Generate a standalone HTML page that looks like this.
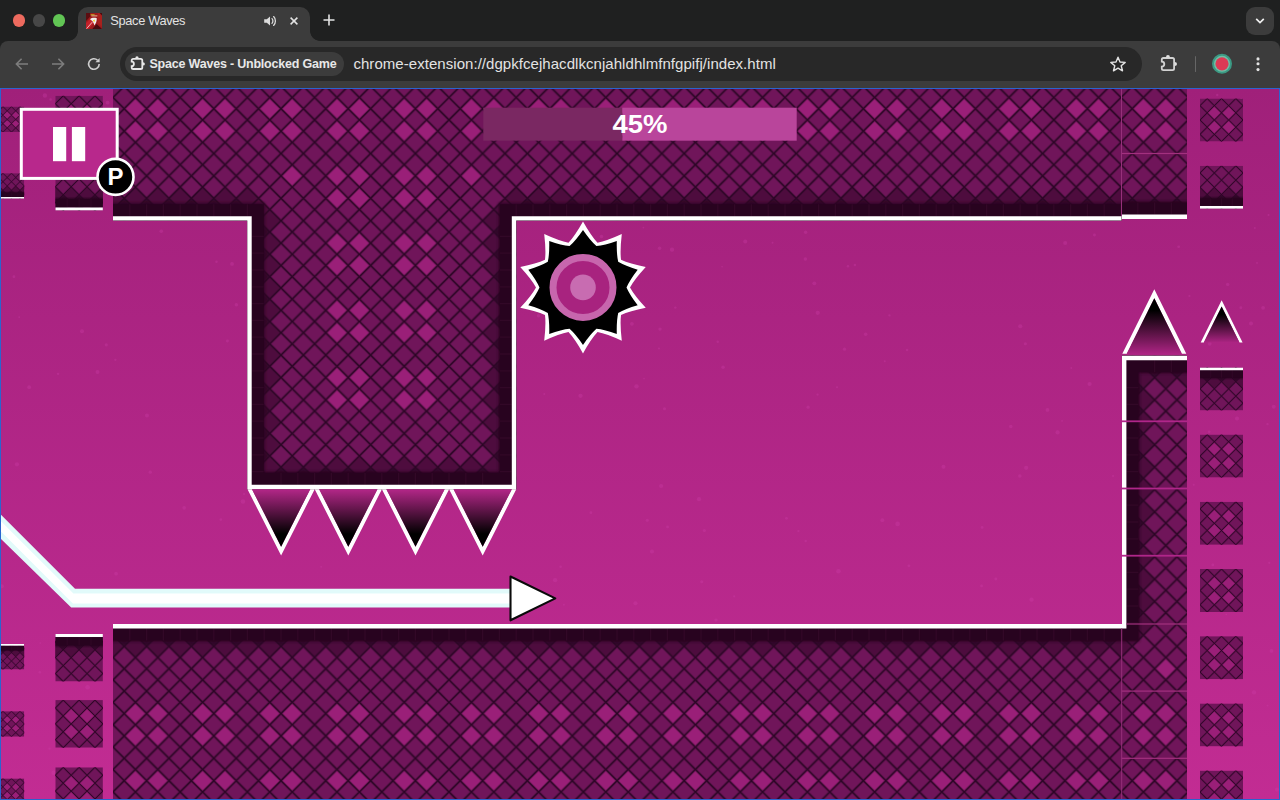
<!DOCTYPE html>
<html><head><meta charset="utf-8"><title>Space Waves</title>
<style>
html,body{margin:0;padding:0;background:#1f2020;overflow:hidden}
body{width:1280px;height:800px;position:relative;font-family:"Liberation Sans",sans-serif}
#game{position:absolute;left:0;top:88px;display:block}
#tabbar{position:absolute;left:0;top:0;width:1280px;height:41px;background:#1f2020}
.tl{position:absolute;top:14px;width:12.5px;height:12.5px;border-radius:50%}
#tab{position:absolute;left:78px;top:7px;width:232px;height:34px;background:#3c3c3c;border-radius:10px 10px 0 0}
#tab:before,#tab:after{content:"";position:absolute;bottom:0;width:10px;height:10px}
#tab:before{left:-10px;background:radial-gradient(circle at 0 0,rgba(60,60,60,0) 9.5px,#3c3c3c 10.2px)}
#tab:after{right:-10px;background:radial-gradient(circle at 100% 0,rgba(60,60,60,0) 9.5px,#3c3c3c 10.2px)}
#fav{position:absolute;left:86px;top:13px;width:16px;height:16px}
#title{position:absolute;left:110.3px;top:12.7px;font-size:12.8px;line-height:16px;color:#e3e3e3;letter-spacing:-.33px;white-space:nowrap}
#toolbar{position:absolute;left:0;top:41px;width:1280px;height:47px;background:#3c3c3c;border-radius:8px 8px 0 0}
#omni{position:absolute;left:120px;top:47px;width:1022px;height:34px;border-radius:17px;background:#282828}
#chip{position:absolute;left:125.2px;top:51.9px;width:219.2px;height:24px;border-radius:12.5px;background:#3c3c3c}
#chiptxt{position:absolute;left:149.4px;top:56.3px;font-size:12.5px;line-height:16px;font-weight:700;color:#e8e8e8;letter-spacing:-.2px;white-space:nowrap}
#url{position:absolute;left:353.4px;top:54.6px;font-size:15px;line-height:18px;color:#e3e3e3;letter-spacing:.05px;white-space:nowrap}
#chev{position:absolute;left:1246px;top:7px;width:28px;height:28px;border-radius:9px;background:#3c3c3c}
svg.ic{position:absolute;overflow:visible}
#sep{position:absolute;left:1194.5px;top:56px;width:1.6px;height:16px;background:#666;border-radius:1px}

</style></head><body>

<div id="tabbar"></div>
<div class="tl" style="left:12.8px;background:#ed6a5e"></div>
<div class="tl" style="left:32.8px;background:#474747"></div>
<div class="tl" style="left:52.8px;background:#61c554"></div>
<div id="tab"></div>
<svg id="fav" viewBox="0 0 16 16"><rect width="16" height="16" fill="#9c1b1c"/><path d="M0 0H4.2V3.4L0 8z" fill="#5c0d11"/><path d="M12 0H16V14L12 10z" fill="#a8211d"/><path d="M13.5 0L16 2.4V0z" fill="#4a0a0e"/><path d="M0 16V10L4 6L8 10L2.5 16z" fill="#c4212a"/><path d="M0.6 15.6L6.2 9.2" stroke="#f4b6bb" stroke-width="1" fill="none"/><path d="M6.3 16L10.6 11L16 16z" fill="#4a0a0e"/><path d="M4 6.2C5.5 4.6 8.5 4.4 10.8 5.2C10.8 8 10 10.4 8.4 12.4C7.8 9.6 6.4 7.6 4 6.2z" fill="#f2efef"/><path d="M6.8 7.4L9 6.4L8.4 9.2z" fill="#f0d21c"/><path d="M4.6 1.8H8.6" stroke="#c8b820" stroke-width="1" fill="none"/><path d="M5.4 2.9H11.4" stroke="#e8c9a0" stroke-width=".9" fill="none"/></svg>
<div id="title">Space Waves</div>
<svg class="ic" style="left:262px;top:13px" width="16" height="16" viewBox="0 0 16 16"><path d="M2.2 6.2H4.8L8 3.4V12.6L4.8 9.8H2.2z" fill="#dcdcdc"/><path d="M10 5.6C11.2 6.8 11.2 9.2 10 10.4" stroke="#dcdcdc" stroke-width="1.3" fill="none" stroke-linecap="round"/><path d="M11.6 3.6C14 5.8 14 10.2 11.6 12.4" stroke="#dcdcdc" stroke-width="1.3" fill="none" stroke-linecap="round"/></svg>
<svg class="ic" style="left:286px;top:13px" width="16" height="16" viewBox="0 0 16 16"><path d="M4.6 4.6L11.4 11.4M11.4 4.6L4.6 11.4" stroke="#e3e3e3" stroke-width="1.5" fill="none"/></svg>
<svg class="ic" style="left:321px;top:12px" width="16" height="16" viewBox="0 0 16 16"><path d="M8 2.5V13.5M2.5 8H13.5" stroke="#e3e3e3" stroke-width="1.6" fill="none"/></svg>
<div id="chev"></div>
<svg class="ic" style="left:1252px;top:13px" width="16" height="16" viewBox="0 0 16 16"><path d="M4.2 5.8L8 9.6L11.8 5.8" stroke="#f0f0f0" stroke-width="1.7" fill="none"/></svg>
<div id="toolbar"></div>
<svg class="ic" style="left:13px;top:55px" width="18" height="18" viewBox="0 0 18 18"><path d="M15 9H3.6M8.6 3.8L3.4 9L8.6 14.2" stroke="#7d7d7d" stroke-width="1.6" fill="none"/></svg>
<svg class="ic" style="left:49px;top:55px" width="18" height="18" viewBox="0 0 18 18"><path d="M3 9H14.4M9.4 3.8L14.6 9L9.4 14.2" stroke="#7d7d7d" stroke-width="1.6" fill="none"/></svg>
<svg class="ic" style="left:85px;top:55px" width="18" height="18" viewBox="0 0 18 18"><path d="M14.2 9A5.3 5.3 0 1 1 12.6 5.2" stroke="#d0d0d0" stroke-width="1.6" fill="none"/><path d="M14.6 3V7.2H10.4z" fill="#d0d0d0"/></svg>
<div id="omni"></div>
<div id="chip"></div>
<svg class="ic" style="left:0;top:0" width="1280" height="88" viewBox="0 0 1280 88"><path d="M131.70 60.40Q131.70 58.80 133.30 58.80H140.70Q142.30 58.80 142.30 60.40V67.40Q142.30 69.00 140.70 69.00H133.30Q131.70 69.00 131.70 67.40V66.10A2.20 2.20 0 0 0 131.70 61.70Z" stroke="#e8e8e8" stroke-width="1.8" fill="none"/><path d="M135.30 58.20A1.70 2.00 0 0 1 138.70 58.20ZM142.90 62.20A2.00 1.70 0 0 1 142.90 65.60Z" fill="#e8e8e8"/></svg>
<div id="chiptxt">Space Waves - Unblocked Game</div>
<div id="url">chrome-extension://dgpkfcejhacdlkcnjahldhlmfnfgpifj/index.html</div>
<svg class="ic" style="left:1109px;top:55px" width="18" height="18" viewBox="0 0 18 18"><path d="M9 2.2L11 7L16.2 7.4L12.2 10.8L13.5 15.8L9 13.1L4.5 15.8L5.8 10.8L1.8 7.4L7 7z" stroke="#e3e3e3" stroke-width="1.4" fill="none" stroke-linejoin="round"/></svg>
<svg class="ic" style="left:0;top:0" width="1280" height="88" viewBox="0 0 1280 88"><path d="M1161.80 59.60Q1161.80 58.00 1163.40 58.00H1172.50Q1174.10 58.00 1174.10 59.60V68.60Q1174.10 70.20 1172.50 70.20H1163.40Q1161.80 70.20 1161.80 68.60V66.60A2.50 2.50 0 0 0 1161.80 61.60Z" stroke="#d2d2d2" stroke-width="1.8" fill="none"/><path d="M1165.95 57.40A2.00 2.30 0 0 1 1169.95 57.40ZM1174.70 62.10A2.30 2.00 0 0 1 1174.70 66.10Z" fill="#e0e0e0"/></svg>
<div id="sep"></div>
<svg class="ic" style="left:1211px;top:53px" width="22" height="22" viewBox="0 0 22 22"><circle cx="11" cy="10.8" r="9" fill="#6fbfa6" stroke="#3b9a84" stroke-width="2"/><circle cx="11" cy="10.8" r="6.6" fill="#dc3a55"/></svg>
<svg class="ic" style="left:1249px;top:55px" width="18" height="18" viewBox="0 0 18 18"><circle cx="9" cy="3.9" r="1.55" fill="#e3e3e3"/><circle cx="9" cy="8.8" r="1.55" fill="#e3e3e3"/><circle cx="9" cy="14.6" r="1.55" fill="#e3e3e3"/></svg>

<svg id="game" width="1280" height="712" viewBox="0 88 1280 712">
<defs>
<linearGradient id="bg" x1="0" y1="88" x2="0" y2="800" gradientUnits="userSpaceOnUse"><stop offset="0" stop-color="#a0207a"/><stop offset="1" stop-color="#c22c93"/></linearGradient>
<linearGradient id="shT" x1="0" y1="0" x2="0" y2="1"><stop offset="0" stop-color="#28031f" stop-opacity="0"/><stop offset="1" stop-color="#28031f" stop-opacity=".8"/></linearGradient>
<symbol id="tile" viewBox="0 0 67.2 67.2" preserveAspectRatio="none"><rect width="67.2" height="67.2" fill="#70155a"/><path d="M22.4 11.2l11.2 11.2l-11.2 11.2l-11.2 -11.2zM22.4 33.6l11.2 11.2l-11.2 11.2l-11.2 -11.2zM44.8 11.2l11.2 11.2l-11.2 11.2l-11.2 -11.2zM44.8 33.6l11.2 11.2l-11.2 11.2l-11.2 -11.2z" fill="#9a1f78"/><path d="M11.2 0L0 11.2M33.6 0L0 33.6M56 0L0 56M78.4 0L0 78.4M100.8 0L0 100.8M123.2 0L0 123.2M-56 0L11.2 67.2M-33.6 0L33.6 67.2M-11.2 0L56 67.2M11.2 0L78.4 67.2M33.6 0L100.8 67.2M56 0L123.2 67.2" stroke="#3c0b33" stroke-opacity=".42" stroke-width="2.8" fill="none"/><path d="M11.2 0L0 11.2M33.6 0L0 33.6M56 0L0 56M78.4 0L0 78.4M100.8 0L0 100.8M123.2 0L0 123.2M-56 0L11.2 67.2M-33.6 0L33.6 67.2M-11.2 0L56 67.2M11.2 0L78.4 67.2M33.6 0L100.8 67.2M56 0L123.2 67.2" stroke="#2a0524" stroke-width="1.3" fill="none"/></symbol>
<symbol id="tileE" viewBox="0 0 67.2 67.2" preserveAspectRatio="none"><rect width="67.2" height="67.2" fill="#70155a"/><path d="M0 33.6l11.2 11.2l-11.2 11.2l-11.2 -11.2zM22.4 33.6l11.2 11.2l-11.2 11.2l-11.2 -11.2zM44.8 33.6l11.2 11.2l-11.2 11.2l-11.2 -11.2zM67.2 33.6l11.2 11.2l-11.2 11.2l-11.2 -11.2z" fill="#4e0c3e"/><path d="M11.2 44.8l11.2 11.2l-11.2 11.2l-11.2 -11.2zM33.6 44.8l11.2 11.2l-11.2 11.2l-11.2 -11.2zM56 44.8l11.2 11.2l-11.2 11.2l-11.2 -11.2z" fill="#33072a"/><path d="M11.2 0L0 11.2M33.6 0L0 33.6M56 0L0 56M78.4 0L0 78.4M100.8 0L0 100.8M123.2 0L0 123.2M-56 0L11.2 67.2M-33.6 0L33.6 67.2M-11.2 0L56 67.2M11.2 0L78.4 67.2M33.6 0L100.8 67.2M56 0L123.2 67.2" stroke="#3c0b33" stroke-opacity=".42" stroke-width="2.8" fill="none"/><path d="M11.2 0L0 11.2M33.6 0L0 33.6M56 0L0 56M78.4 0L0 78.4M100.8 0L0 100.8M123.2 0L0 123.2M-56 0L11.2 67.2M-33.6 0L33.6 67.2M-11.2 0L56 67.2M11.2 0L78.4 67.2M33.6 0L100.8 67.2M56 0L123.2 67.2" stroke="#2a0524" stroke-width="1.3" fill="none"/><rect y="47" width="67.2" height="4.2" fill="url(#shT)"/><rect y="50.8" width="67.2" height="12.2" fill="#28031f"/><path d="M16.8 51V63M33.6 51V63M50.4 51V63" stroke="#320827" stroke-width="1.4"/><rect y="62.8" width="67.2" height="4.4" fill="#fff"/></symbol>
<pattern id="pat" x="113" y="86.3" width="67.2" height="67.2" patternUnits="userSpaceOnUse"><path d="M11.2 0L0 11.2M33.6 0L0 33.6M56 0L0 56M78.4 0L0 78.4M100.8 0L0 100.8M123.2 0L0 123.2M-56 0L11.2 67.2M-33.6 0L33.6 67.2M-11.2 0L56 67.2M11.2 0L78.4 67.2M33.6 0L100.8 67.2M56 0L123.2 67.2" stroke="#3c0b33" stroke-opacity=".42" stroke-width="2.8" fill="none"/><path d="M11.2 0L0 11.2M33.6 0L0 33.6M56 0L0 56M78.4 0L0 78.4M100.8 0L0 100.8M123.2 0L0 123.2M-56 0L11.2 67.2M-33.6 0L33.6 67.2M-11.2 0L56 67.2M11.2 0L78.4 67.2M33.6 0L100.8 67.2M56 0L123.2 67.2" stroke="#2a0524" stroke-width="1.3" fill="none"/></pattern>
<linearGradient id="spk" x1="0" y1="0" x2="0" y2="1"><stop offset="0" stop-color="#000"/><stop offset=".22" stop-color="#000"/><stop offset="1" stop-color="#ac2483"/></linearGradient>
<linearGradient id="spkd" x1="0" y1="1" x2="0" y2="0"><stop offset="0" stop-color="#000"/><stop offset=".22" stop-color="#000"/><stop offset="1" stop-color="#b32788"/></linearGradient>
<clipPath id="cTop"><path d="M113 88H1121.5V220.6H516.2V489.25H247.3V220.6H113z"/></clipPath>
<clipPath id="cBot"><path d="M113 624H1122V355.75H1187V800H113z"/></clipPath>
<clipPath id="cPil"><rect x="1121.5" y="88" width="65.5" height="131"/></clipPath>
<filter id="blur" filterUnits="userSpaceOnUse" x="0" y="60" width="1300" height="780"><feGaussianBlur stdDeviation="1.6"/></filter>
</defs>
<rect x="0" y="88" width="1280" height="712" fill="url(#bg)"/>
<g fill="#d040ac" opacity=".3"><circle cx="579.05" cy="341.33" r="2.19"/><circle cx="596.03" cy="301.73" r="1.68"/><circle cx="236.37" cy="304.72" r="1.74"/><circle cx="1015.01" cy="104.95" r="1.26"/><circle cx="116.06" cy="573.66" r="1.84"/><circle cx="53.61" cy="772.72" r="2.25"/><circle cx="837.02" cy="387.27" r="1.04"/><circle cx="19.2" cy="317.03" r="0.89"/><circle cx="243.47" cy="149.42" r="0.85"/><circle cx="593.84" cy="255.05" r="2.06"/><circle cx="664.48" cy="408.75" r="1.55"/><circle cx="847.94" cy="266.2" r="1.22"/><circle cx="1277" cy="789.58" r="2.06"/><circle cx="906" cy="182.65" r="1.14"/><circle cx="369.97" cy="100.87" r="1.95"/><circle cx="512.51" cy="613.69" r="1.38"/><circle cx="1226.29" cy="614.49" r="0.8"/><circle cx="268.44" cy="686.03" r="1.5"/><circle cx="1254.86" cy="227.97" r="0.91"/><circle cx="805.7" cy="541.04" r="1.2"/><circle cx="111.54" cy="191.5" r="2.25"/><circle cx="970.29" cy="109.94" r="1.17"/><circle cx="129.34" cy="99.41" r="2"/><circle cx="227.43" cy="340.95" r="1.47"/><circle cx="244.08" cy="494.12" r="1"/><circle cx="823.96" cy="109.61" r="1.43"/><circle cx="272.47" cy="161.22" r="2.26"/><circle cx="1028.37" cy="177.16" r="2.13"/><circle cx="269.71" cy="226.08" r="2.08"/><circle cx="821.55" cy="106.16" r="2.28"/><circle cx="272.95" cy="156.21" r="1.96"/><circle cx="421.06" cy="173.39" r="0.91"/><circle cx="115.35" cy="359.82" r="1.16"/><circle cx="769.64" cy="212.88" r="1.48"/><circle cx="1227.69" cy="284.4" r="1.66"/><circle cx="1109.15" cy="127.87" r="1.03"/><circle cx="1162.78" cy="582.38" r="1.17"/><circle cx="242.94" cy="501.54" r="2.21"/><circle cx="251.63" cy="733.43" r="2.12"/><circle cx="772.52" cy="242.79" r="0.96"/><circle cx="49.53" cy="748.68" r="1.16"/><circle cx="901.86" cy="155.66" r="2.04"/><circle cx="763.48" cy="172.02" r="1.06"/><circle cx="922.05" cy="100.66" r="1.14"/><circle cx="715.99" cy="620.12" r="1.72"/><circle cx="358.68" cy="694.34" r="1.11"/><circle cx="21.22" cy="160.95" r="1.47"/><circle cx="77.38" cy="125.77" r="1.35"/><circle cx="732.38" cy="113.18" r="1.34"/><circle cx="1140.4" cy="770.61" r="1.79"/><circle cx="884.76" cy="361.21" r="1.01"/><circle cx="44.9" cy="95.5" r="2.17"/><circle cx="897.24" cy="748.79" r="0.83"/><circle cx="814.32" cy="283.35" r="1.9"/><circle cx="408.2" cy="794.19" r="0.91"/><circle cx="699" cy="499.15" r="2.15"/><circle cx="943.47" cy="466.86" r="1.99"/><circle cx="1171.2" cy="201.78" r="1.83"/><circle cx="1153.07" cy="641.04" r="1.43"/><circle cx="1011.88" cy="632.46" r="1.66"/><circle cx="799.95" cy="219.02" r="1.67"/><circle cx="779.35" cy="102.46" r="1.76"/><circle cx="1271.45" cy="650.88" r="1.89"/><circle cx="497.2" cy="497.21" r="1.67"/><circle cx="563.87" cy="604.66" r="0.93"/><circle cx="960.27" cy="96.25" r="1.7"/><circle cx="615.62" cy="144.77" r="1.85"/><circle cx="636.48" cy="386.37" r="2.18"/><circle cx="327.46" cy="95.22" r="1.25"/><circle cx="868.02" cy="134.53" r="1.05"/><circle cx="1159.32" cy="426.33" r="1.46"/><circle cx="1141.41" cy="188.58" r="1.8"/><circle cx="254.09" cy="248.8" r="2.01"/><circle cx="1170.2" cy="651.42" r="1.38"/><circle cx="746.38" cy="183.25" r="1"/><circle cx="635.48" cy="603.27" r="2.07"/><circle cx="910.36" cy="733.26" r="1.22"/><circle cx="216.49" cy="261.73" r="1.21"/><circle cx="274.02" cy="238.11" r="1.74"/><circle cx="632.16" cy="182.7" r="2.06"/><circle cx="1257.01" cy="262.95" r="0.91"/><circle cx="40.3" cy="642.99" r="0.86"/><circle cx="907.05" cy="349.96" r="1.26"/><circle cx="1013.14" cy="95.56" r="1"/><circle cx="582.19" cy="95.9" r="2.04"/><circle cx="303.88" cy="115.56" r="0.87"/><circle cx="805.35" cy="258.96" r="1.74"/><circle cx="838.46" cy="571.26" r="2.24"/><circle cx="876.15" cy="133.4" r="1.51"/><circle cx="228.72" cy="95.2" r="1.51"/><circle cx="914.14" cy="126.67" r="1.21"/><circle cx="442.55" cy="460.82" r="1.58"/><circle cx="786.49" cy="518.3" r="1.39"/><circle cx="1013.67" cy="681.32" r="0.93"/><circle cx="1193.73" cy="484.83" r="0.99"/><circle cx="580.53" cy="395.86" r="2.16"/><circle cx="482.31" cy="348.54" r="2.12"/><circle cx="1019.86" cy="726.34" r="1.5"/><circle cx="833.69" cy="135.35" r="1.88"/><circle cx="1047.48" cy="409.92" r="1.88"/><circle cx="273.02" cy="674.06" r="2.27"/><circle cx="1251.02" cy="323.55" r="1.99"/><circle cx="410.11" cy="685.7" r="2.08"/><circle cx="446.09" cy="102.89" r="1.46"/><circle cx="704.39" cy="530.5" r="1.53"/><circle cx="36.37" cy="573.12" r="0.9"/><circle cx="1023.82" cy="124.72" r="1.3"/><circle cx="1008.52" cy="115.46" r="1.02"/><circle cx="661.15" cy="485.98" r="2.06"/><circle cx="882.4" cy="728.13" r="1.54"/><circle cx="1214.92" cy="103.46" r="1.13"/><circle cx="674.13" cy="170.49" r="1.89"/><circle cx="817.76" cy="312.81" r="2.07"/><circle cx="716.76" cy="180.87" r="1.37"/><circle cx="1081.93" cy="674.68" r="1.11"/><circle cx="1088.99" cy="755.74" r="1.59"/><circle cx="733.43" cy="133.97" r="1.6"/><circle cx="644.06" cy="378.5" r="0.84"/><circle cx="1240.84" cy="307.76" r="1.4"/><circle cx="1025.37" cy="343.79" r="1.54"/><circle cx="884.46" cy="100.24" r="1.61"/><circle cx="529.63" cy="741.59" r="2.19"/><circle cx="344.59" cy="277.02" r="0.99"/><circle cx="555.11" cy="580.14" r="2.15"/><circle cx="609.96" cy="183.62" r="1.09"/><circle cx="790.91" cy="703.67" r="0.99"/><circle cx="997.49" cy="95.77" r="1.09"/><circle cx="290.89" cy="451.17" r="1.28"/><circle cx="454.84" cy="390.88" r="0.96"/><circle cx="935.54" cy="111.05" r="1.57"/><circle cx="320.71" cy="132.85" r="1.6"/><circle cx="559.07" cy="215.2" r="1.42"/><circle cx="677.57" cy="120.77" r="1.11"/><circle cx="808.08" cy="407.14" r="1.59"/><circle cx="1089.61" cy="383.99" r="2.09"/><circle cx="297.8" cy="502.88" r="2.02"/><circle cx="1155.43" cy="182.95" r="1.27"/><circle cx="1181.14" cy="140.17" r="2.3"/><circle cx="1136.05" cy="113.77" r="1.16"/><circle cx="930.02" cy="156.74" r="0.95"/><circle cx="1065.18" cy="242.9" r="1.98"/><circle cx="161.28" cy="231.21" r="1.83"/><circle cx="22.73" cy="133.96" r="1.82"/><circle cx="1166.56" cy="755.66" r="0.97"/><circle cx="647.27" cy="520.27" r="1.55"/><circle cx="877.67" cy="129.89" r="0.91"/><circle cx="135.9" cy="96.89" r="1.63"/><circle cx="658.98" cy="348.48" r="1.02"/><circle cx="236.21" cy="135" r="2.06"/><circle cx="1267.59" cy="705.59" r="0.94"/><circle cx="79.29" cy="735.07" r="1.49"/><circle cx="978.84" cy="188.51" r="1.5"/><circle cx="659.57" cy="248.28" r="1.7"/><circle cx="16.95" cy="464.34" r="2.07"/><circle cx="232.02" cy="263.93" r="1.91"/><circle cx="518.79" cy="131.95" r="1.05"/><circle cx="656.08" cy="95.38" r="2.14"/><circle cx="1026.18" cy="467.8" r="2.09"/><circle cx="805.61" cy="232.27" r="1.7"/><circle cx="645.49" cy="773.33" r="2.01"/><circle cx="330.58" cy="687.23" r="1.92"/><circle cx="995.82" cy="578.99" r="1.41"/><circle cx="1147.58" cy="650.94" r="1.84"/><circle cx="982.11" cy="527.44" r="1.41"/><circle cx="924.97" cy="100.92" r="1.31"/><circle cx="600.12" cy="95.2" r="1.33"/><circle cx="817.55" cy="394.54" r="1.15"/><circle cx="1209.18" cy="431.87" r="1.31"/><circle cx="844.49" cy="349.15" r="1.6"/><circle cx="498.68" cy="794.86" r="1.76"/><circle cx="897.6" cy="523.89" r="2.27"/><circle cx="29.21" cy="387.13" r="1.91"/><circle cx="328.49" cy="230.47" r="0.88"/><circle cx="250.17" cy="215.16" r="0.95"/><circle cx="321.14" cy="680.63" r="1.63"/><circle cx="650.01" cy="754.14" r="1.65"/><circle cx="1273.73" cy="406.74" r="2.01"/><circle cx="97.53" cy="372.05" r="1.94"/><circle cx="57.75" cy="709.46" r="1.04"/><circle cx="603.85" cy="123.57" r="1.54"/><circle cx="782.3" cy="99.23" r="2.22"/><circle cx="538.5" cy="315.8" r="1.7"/><circle cx="467.94" cy="168.43" r="1.78"/><circle cx="717.62" cy="167.41" r="1.87"/><circle cx="378.93" cy="95.32" r="1.17"/><circle cx="54.75" cy="119.87" r="1.93"/><circle cx="499.14" cy="671.23" r="1.92"/><circle cx="64.2" cy="780.91" r="2.22"/><circle cx="94.09" cy="680.52" r="1.44"/><circle cx="611.34" cy="761.56" r="1.17"/><circle cx="669.9" cy="717.95" r="1.88"/><circle cx="599.49" cy="768.54" r="2.03"/><circle cx="772.64" cy="109.29" r="1.74"/><circle cx="583.28" cy="134.91" r="0.88"/><circle cx="675.97" cy="111.42" r="1.46"/><circle cx="854.9" cy="265.01" r="1.19"/><circle cx="745.26" cy="241.58" r="1.97"/><circle cx="679.38" cy="792.02" r="2.23"/><circle cx="939.88" cy="148" r="0.97"/><circle cx="1142.66" cy="547.04" r="1.74"/><circle cx="459.76" cy="161.98" r="1.83"/><circle cx="723.06" cy="367.17" r="1.75"/><circle cx="964.29" cy="130.16" r="1.17"/><circle cx="1254.04" cy="692.41" r="2.12"/><circle cx="50.57" cy="99.53" r="1.21"/><circle cx="544.25" cy="393.96" r="0.95"/><circle cx="693.31" cy="101.22" r="0.93"/><circle cx="865.64" cy="334.14" r="1.75"/><circle cx="477.68" cy="280.77" r="1.12"/><circle cx="439.94" cy="506.91" r="2.06"/><circle cx="95.16" cy="110.35" r="2.01"/><circle cx="798.38" cy="531.03" r="1.12"/><circle cx="543.18" cy="156.13" r="2.01"/><circle cx="472.26" cy="420.63" r="2.28"/><circle cx="416.5" cy="332.56" r="1.92"/><circle cx="1178.66" cy="246.73" r="1.35"/><circle cx="124.18" cy="645.65" r="0.92"/><circle cx="106.27" cy="344.86" r="1.53"/><circle cx="877.22" cy="174.61" r="1.96"/><circle cx="97.38" cy="138.36" r="1.79"/><circle cx="104.59" cy="176.99" r="1.89"/><circle cx="888.3" cy="167.12" r="1.01"/><circle cx="457.99" cy="488.33" r="1.35"/><circle cx="150.25" cy="472.19" r="1.65"/><circle cx="1175.75" cy="721.14" r="2.17"/><circle cx="560.63" cy="566.67" r="1.26"/><circle cx="406.55" cy="229.28" r="2.2"/><circle cx="1145.25" cy="152.03" r="1.34"/><circle cx="467.92" cy="208.14" r="1.39"/><circle cx="496.1" cy="131.9" r="1.65"/><circle cx="1020.27" cy="326.32" r="2.05"/><circle cx="720.36" cy="125.88" r="1.94"/><circle cx="1127.55" cy="166.46" r="0.83"/><circle cx="660.02" cy="329.1" r="1.65"/><circle cx="1237.01" cy="418.44" r="2.01"/><circle cx="81.99" cy="331.16" r="1.98"/><circle cx="107.58" cy="102.71" r="1.91"/><circle cx="1150.81" cy="103.23" r="1.75"/><circle cx="184.16" cy="507.87" r="1.77"/><circle cx="314.18" cy="141.03" r="1.95"/><circle cx="667.59" cy="526.91" r="1.39"/><circle cx="432.4" cy="755.53" r="1.81"/><circle cx="631.89" cy="323.85" r="1.88"/><circle cx="906.42" cy="691.54" r="1.42"/><circle cx="1057.58" cy="432.45" r="2.08"/><circle cx="1031.56" cy="599.7" r="2.13"/><circle cx="1225.97" cy="408.73" r="1.59"/><circle cx="908.91" cy="565.82" r="1.43"/><circle cx="538.18" cy="116.98" r="1.91"/><circle cx="1268.49" cy="215.07" r="1.05"/><circle cx="261.59" cy="245" r="1.24"/><circle cx="1241.29" cy="99.32" r="1.26"/><circle cx="146.96" cy="415.56" r="1.96"/><circle cx="229.67" cy="99.74" r="1.49"/><circle cx="747.61" cy="684.88" r="0.85"/><circle cx="139.11" cy="128.42" r="1.13"/><circle cx="301.32" cy="479.86" r="1.69"/><circle cx="286.67" cy="128.57" r="1.22"/><circle cx="220.82" cy="519.61" r="1.27"/><circle cx="701.74" cy="581.65" r="1.52"/><circle cx="333.39" cy="659.59" r="2.17"/><circle cx="437.86" cy="331.58" r="2.24"/><circle cx="617.75" cy="141.24" r="0.87"/><circle cx="1212.83" cy="564.94" r="1.38"/><circle cx="675.31" cy="307.61" r="1.21"/><circle cx="1267.51" cy="424.13" r="1.16"/><circle cx="13.92" cy="276.66" r="1.36"/><circle cx="1019.87" cy="476.04" r="1.71"/><circle cx="201.33" cy="119.96" r="1.28"/><circle cx="332.06" cy="638.94" r="1.57"/><circle cx="815.32" cy="786.35" r="1.2"/><circle cx="684.26" cy="118.2" r="1.96"/><circle cx="1.75" cy="586.26" r="2.07"/><circle cx="1052.27" cy="102.83" r="1.2"/><circle cx="917.15" cy="105.53" r="1.52"/><circle cx="599.89" cy="739.92" r="1.68"/><circle cx="1097.4" cy="176.89" r="1.98"/><circle cx="533.72" cy="693.63" r="0.94"/><circle cx="1057.7" cy="136.6" r="1.62"/><circle cx="672.86" cy="120.15" r="2.05"/><circle cx="398.6" cy="180.39" r="0.91"/><circle cx="391.3" cy="272.93" r="1.87"/><circle cx="460.43" cy="451.23" r="0.96"/><circle cx="504.62" cy="269.2" r="2.25"/><circle cx="1062.07" cy="420.88" r="0.82"/><circle cx="482.72" cy="472.89" r="1.16"/><circle cx="722.07" cy="266.71" r="0.82"/><circle cx="1269.28" cy="562.87" r="1.11"/><circle cx="788.57" cy="170.59" r="1.36"/><circle cx="690.9" cy="174.29" r="1.31"/><circle cx="502.02" cy="432.41" r="1.18"/><circle cx="255.93" cy="493.68" r="1.29"/><circle cx="1209.65" cy="343.74" r="1.89"/><circle cx="424.52" cy="592.16" r="0.94"/><circle cx="180.25" cy="105" r="1.82"/><circle cx="906.61" cy="126.92" r="1.4"/><circle cx="1071.26" cy="368.06" r="0.94"/><circle cx="290.03" cy="120.01" r="0.99"/><circle cx="520.76" cy="101.25" r="2.18"/><circle cx="546.58" cy="304.47" r="1.77"/><circle cx="981.58" cy="585.93" r="1.38"/><circle cx="424.21" cy="236.96" r="0.82"/><circle cx="512.91" cy="463.25" r="2.27"/><circle cx="1010.78" cy="426.55" r="1.71"/><circle cx="23.73" cy="190.68" r="1.31"/><circle cx="832.92" cy="107.38" r="1.37"/><circle cx="651.98" cy="551.45" r="2.04"/><circle cx="782.64" cy="120.37" r="1.95"/><circle cx="1155.84" cy="332.28" r="1.33"/><circle cx="640.53" cy="115.79" r="1.87"/><circle cx="1263.08" cy="307.78" r="1.87"/><circle cx="1069.47" cy="132.67" r="2.22"/><circle cx="802.71" cy="132.91" r="0.92"/><circle cx="313.09" cy="354.73" r="1.85"/><circle cx="421.36" cy="708.16" r="1.34"/><circle cx="592.68" cy="111.35" r="2.26"/><circle cx="173.57" cy="678.78" r="1.62"/><circle cx="717.73" cy="341.79" r="1.2"/><circle cx="1163.94" cy="785.12" r="2.03"/><circle cx="769.93" cy="111.02" r="2.04"/><circle cx="369.38" cy="670.61" r="1.16"/><circle cx="734.19" cy="596.36" r="1.08"/><circle cx="701.26" cy="101.81" r="0.85"/><circle cx="230.49" cy="778.71" r="2.21"/><circle cx="842.72" cy="178.87" r="1.81"/><circle cx="944.23" cy="218.62" r="1.69"/><circle cx="1028.89" cy="95.43" r="1.1"/><circle cx="599.07" cy="116.12" r="1.38"/><circle cx="728.98" cy="124.97" r="1.58"/><circle cx="337.48" cy="347.91" r="1.3"/><circle cx="821.38" cy="96.93" r="1.81"/><circle cx="185.28" cy="744.59" r="1.7"/><circle cx="601.48" cy="236.52" r="1.74"/><circle cx="882.32" cy="520.15" r="1.93"/><circle cx="621.81" cy="788.23" r="2.06"/><circle cx="1094.46" cy="235.04" r="1.45"/><circle cx="724.44" cy="680.17" r="1.59"/><circle cx="672" cy="249.66" r="2.16"/><circle cx="410.48" cy="98.74" r="1.89"/><circle cx="1152.18" cy="494.23" r="1.7"/><circle cx="962.41" cy="177.45" r="1.69"/><circle cx="89.34" cy="111.45" r="1.47"/><circle cx="643.37" cy="227.55" r="0.88"/><circle cx="889.48" cy="315.39" r="1.16"/><circle cx="392.06" cy="226.83" r="1.15"/><circle cx="87.6" cy="687.22" r="2.25"/><circle cx="852.1" cy="635.85" r="1.43"/><circle cx="1030.73" cy="141.53" r="1.92"/><circle cx="725.51" cy="678.04" r="0.95"/><circle cx="1014.22" cy="111.29" r="1.61"/><circle cx="1217.25" cy="95" r="1.17"/><circle cx="383.06" cy="187.45" r="0.89"/><circle cx="1145.76" cy="579.85" r="1.4"/><circle cx="456.32" cy="362.09" r="0.87"/><circle cx="39.85" cy="672.35" r="1.26"/><circle cx="637.97" cy="713.97" r="2.27"/><circle cx="604.98" cy="135.92" r="1.24"/><circle cx="1180.99" cy="670.37" r="1.09"/><circle cx="1072.53" cy="203.05" r="1.51"/><circle cx="220.01" cy="650.8" r="2.29"/><circle cx="258.57" cy="401.81" r="1.09"/><circle cx="1126.62" cy="98.19" r="0.96"/><circle cx="929" cy="181.51" r="2.15"/><circle cx="1113.07" cy="475.91" r="1"/><circle cx="890.82" cy="718.59" r="1.47"/><circle cx="101.11" cy="142.08" r="1.26"/><circle cx="909.49" cy="132.41" r="1.07"/><circle cx="301.37" cy="430.5" r="1.99"/><circle cx="476.82" cy="428.16" r="2.13"/><circle cx="755.07" cy="144.29" r="1.25"/><circle cx="1186.24" cy="432.73" r="1.22"/><circle cx="819.11" cy="104.17" r="2.27"/><circle cx="563.64" cy="316.96" r="1.6"/><circle cx="58.04" cy="373.86" r="1.23"/><circle cx="321.16" cy="566.85" r="0.93"/><circle cx="365" cy="517.77" r="1.17"/><circle cx="357.25" cy="332.17" r="1.08"/><circle cx="1148.2" cy="779.62" r="0.85"/><circle cx="590.89" cy="512.66" r="1.38"/><circle cx="1189.46" cy="295.95" r="1.07"/></g>
<use href="#tile" x="-1.3" y="106.6" width="25.5" height="25.5"/>
<use href="#tileE" x="-1.3" y="173.2" width="25.5" height="25.5"/>
<use href="#tileE" x="-1.3" y="644" width="25.5" height="25.5" transform="translate(0 1313.5) scale(1 -1)"/>
<use href="#tile" x="-1.3" y="711.2" width="25.5" height="25.5"/>
<use href="#tile" x="-1.3" y="778.4" width="25.5" height="25.5"/>
<use href="#tile" x="55.3" y="95.8" width="47.6" height="47.6"/>
<use href="#tileE" x="55.3" y="163" width="47.6" height="47.6"/>
<use href="#tileE" x="55.3" y="633.9" width="47.6" height="47.6" transform="translate(0 1315.4) scale(1 -1)"/>
<use href="#tile" x="55.3" y="700.1" width="47.6" height="47.6"/>
<use href="#tile" x="55.3" y="767.3" width="47.6" height="47.6"/>
<use href="#tile" x="1200" y="98.5" width="43" height="43"/>
<use href="#tileE" x="1200" y="165.8" width="43" height="43"/>
<use href="#tileE" x="1200" y="367.4" width="43" height="43" transform="translate(0 777.8) scale(1 -1)"/>
<use href="#tile" x="1200" y="434.6" width="43" height="43"/>
<use href="#tile" x="1200" y="501.8" width="43" height="43"/>
<use href="#tile" x="1200" y="569" width="43" height="43"/>
<use href="#tile" x="1200" y="636.2" width="43" height="43"/>
<use href="#tile" x="1200" y="703.4" width="43" height="43"/>
<use href="#tile" x="1200" y="770.6" width="43" height="43"/>
<path d="M113 88H1121.5V220.6H516.2V489.25H247.3V220.6H113zM113 624H1122V355.75H1187V800H113zM1121.5 88H1187V219H1121.5z" fill="#70155a"/>
<g clip-path="url(#cTop)"><path d="M135.4 97.5l11.2 11.2l-11.2 11.2l-11.2 -11.2zM135.4 119.9l11.2 11.2l-11.2 11.2l-11.2 -11.2zM157.8 97.5l11.2 11.2l-11.2 11.2l-11.2 -11.2zM157.8 119.9l11.2 11.2l-11.2 11.2l-11.2 -11.2zM202.6 97.5l11.2 11.2l-11.2 11.2l-11.2 -11.2zM202.6 119.9l11.2 11.2l-11.2 11.2l-11.2 -11.2zM225 97.5l11.2 11.2l-11.2 11.2l-11.2 -11.2zM225 119.9l11.2 11.2l-11.2 11.2l-11.2 -11.2zM269.8 97.5l11.2 11.2l-11.2 11.2l-11.2 -11.2zM269.8 119.9l11.2 11.2l-11.2 11.2l-11.2 -11.2zM292.2 97.5l11.2 11.2l-11.2 11.2l-11.2 -11.2zM292.2 119.9l11.2 11.2l-11.2 11.2l-11.2 -11.2zM292.2 164.7l11.2 11.2l-11.2 11.2l-11.2 -11.2zM337 97.5l11.2 11.2l-11.2 11.2l-11.2 -11.2zM337 119.9l11.2 11.2l-11.2 11.2l-11.2 -11.2zM337 164.7l11.2 11.2l-11.2 11.2l-11.2 -11.2zM337 187.1l11.2 11.2l-11.2 11.2l-11.2 -11.2zM337 231.9l11.2 11.2l-11.2 11.2l-11.2 -11.2zM337 254.3l11.2 11.2l-11.2 11.2l-11.2 -11.2zM337 299.1l11.2 11.2l-11.2 11.2l-11.2 -11.2zM337 321.5l11.2 11.2l-11.2 11.2l-11.2 -11.2zM337 366.3l11.2 11.2l-11.2 11.2l-11.2 -11.2zM337 388.7l11.2 11.2l-11.2 11.2l-11.2 -11.2zM359.4 97.5l11.2 11.2l-11.2 11.2l-11.2 -11.2zM359.4 119.9l11.2 11.2l-11.2 11.2l-11.2 -11.2zM359.4 164.7l11.2 11.2l-11.2 11.2l-11.2 -11.2zM359.4 187.1l11.2 11.2l-11.2 11.2l-11.2 -11.2zM359.4 231.9l11.2 11.2l-11.2 11.2l-11.2 -11.2zM359.4 254.3l11.2 11.2l-11.2 11.2l-11.2 -11.2zM359.4 299.1l11.2 11.2l-11.2 11.2l-11.2 -11.2zM359.4 321.5l11.2 11.2l-11.2 11.2l-11.2 -11.2zM359.4 366.3l11.2 11.2l-11.2 11.2l-11.2 -11.2zM359.4 388.7l11.2 11.2l-11.2 11.2l-11.2 -11.2zM404.2 97.5l11.2 11.2l-11.2 11.2l-11.2 -11.2zM404.2 119.9l11.2 11.2l-11.2 11.2l-11.2 -11.2zM404.2 164.7l11.2 11.2l-11.2 11.2l-11.2 -11.2zM404.2 187.1l11.2 11.2l-11.2 11.2l-11.2 -11.2zM404.2 231.9l11.2 11.2l-11.2 11.2l-11.2 -11.2zM404.2 254.3l11.2 11.2l-11.2 11.2l-11.2 -11.2zM404.2 299.1l11.2 11.2l-11.2 11.2l-11.2 -11.2zM404.2 321.5l11.2 11.2l-11.2 11.2l-11.2 -11.2zM404.2 366.3l11.2 11.2l-11.2 11.2l-11.2 -11.2zM404.2 388.7l11.2 11.2l-11.2 11.2l-11.2 -11.2zM426.6 97.5l11.2 11.2l-11.2 11.2l-11.2 -11.2zM426.6 119.9l11.2 11.2l-11.2 11.2l-11.2 -11.2zM426.6 164.7l11.2 11.2l-11.2 11.2l-11.2 -11.2zM426.6 187.1l11.2 11.2l-11.2 11.2l-11.2 -11.2zM426.6 231.9l11.2 11.2l-11.2 11.2l-11.2 -11.2zM426.6 254.3l11.2 11.2l-11.2 11.2l-11.2 -11.2zM426.6 299.1l11.2 11.2l-11.2 11.2l-11.2 -11.2zM426.6 321.5l11.2 11.2l-11.2 11.2l-11.2 -11.2zM426.6 366.3l11.2 11.2l-11.2 11.2l-11.2 -11.2zM426.6 388.7l11.2 11.2l-11.2 11.2l-11.2 -11.2zM471.4 97.5l11.2 11.2l-11.2 11.2l-11.2 -11.2zM471.4 119.9l11.2 11.2l-11.2 11.2l-11.2 -11.2zM471.4 164.7l11.2 11.2l-11.2 11.2l-11.2 -11.2zM493.8 97.5l11.2 11.2l-11.2 11.2l-11.2 -11.2zM493.8 119.9l11.2 11.2l-11.2 11.2l-11.2 -11.2zM538.6 97.5l11.2 11.2l-11.2 11.2l-11.2 -11.2zM538.6 119.9l11.2 11.2l-11.2 11.2l-11.2 -11.2zM561 97.5l11.2 11.2l-11.2 11.2l-11.2 -11.2zM561 119.9l11.2 11.2l-11.2 11.2l-11.2 -11.2zM605.8 97.5l11.2 11.2l-11.2 11.2l-11.2 -11.2zM605.8 119.9l11.2 11.2l-11.2 11.2l-11.2 -11.2zM628.2 97.5l11.2 11.2l-11.2 11.2l-11.2 -11.2zM628.2 119.9l11.2 11.2l-11.2 11.2l-11.2 -11.2zM673 97.5l11.2 11.2l-11.2 11.2l-11.2 -11.2zM673 119.9l11.2 11.2l-11.2 11.2l-11.2 -11.2zM695.4 97.5l11.2 11.2l-11.2 11.2l-11.2 -11.2zM695.4 119.9l11.2 11.2l-11.2 11.2l-11.2 -11.2zM740.2 97.5l11.2 11.2l-11.2 11.2l-11.2 -11.2zM740.2 119.9l11.2 11.2l-11.2 11.2l-11.2 -11.2zM762.6 97.5l11.2 11.2l-11.2 11.2l-11.2 -11.2zM762.6 119.9l11.2 11.2l-11.2 11.2l-11.2 -11.2zM807.4 97.5l11.2 11.2l-11.2 11.2l-11.2 -11.2zM807.4 119.9l11.2 11.2l-11.2 11.2l-11.2 -11.2zM829.8 97.5l11.2 11.2l-11.2 11.2l-11.2 -11.2zM829.8 119.9l11.2 11.2l-11.2 11.2l-11.2 -11.2zM874.6 97.5l11.2 11.2l-11.2 11.2l-11.2 -11.2zM874.6 119.9l11.2 11.2l-11.2 11.2l-11.2 -11.2zM897 97.5l11.2 11.2l-11.2 11.2l-11.2 -11.2zM897 119.9l11.2 11.2l-11.2 11.2l-11.2 -11.2zM941.8 97.5l11.2 11.2l-11.2 11.2l-11.2 -11.2zM941.8 119.9l11.2 11.2l-11.2 11.2l-11.2 -11.2zM964.2 97.5l11.2 11.2l-11.2 11.2l-11.2 -11.2zM964.2 119.9l11.2 11.2l-11.2 11.2l-11.2 -11.2zM1009 97.5l11.2 11.2l-11.2 11.2l-11.2 -11.2zM1009 119.9l11.2 11.2l-11.2 11.2l-11.2 -11.2zM1031.4 97.5l11.2 11.2l-11.2 11.2l-11.2 -11.2zM1031.4 119.9l11.2 11.2l-11.2 11.2l-11.2 -11.2zM1076.2 97.5l11.2 11.2l-11.2 11.2l-11.2 -11.2zM1076.2 119.9l11.2 11.2l-11.2 11.2l-11.2 -11.2zM1098.6 97.5l11.2 11.2l-11.2 11.2l-11.2 -11.2zM1098.6 119.9l11.2 11.2l-11.2 11.2l-11.2 -11.2z" fill="#9a1f78"/><path d="M113 187.1l11.2 11.2l-11.2 11.2l-11.2 -11.2zM135.4 187.1l11.2 11.2l-11.2 11.2l-11.2 -11.2zM157.8 187.1l11.2 11.2l-11.2 11.2l-11.2 -11.2zM180.2 187.1l11.2 11.2l-11.2 11.2l-11.2 -11.2zM202.6 187.1l11.2 11.2l-11.2 11.2l-11.2 -11.2zM225 187.1l11.2 11.2l-11.2 11.2l-11.2 -11.2zM247.4 187.1l11.2 11.2l-11.2 11.2l-11.2 -11.2zM258.6 198.3l11.2 11.2l-11.2 11.2l-11.2 -11.2zM269.8 209.5l11.2 11.2l-11.2 11.2l-11.2 -11.2zM269.8 231.9l11.2 11.2l-11.2 11.2l-11.2 -11.2zM269.8 254.3l11.2 11.2l-11.2 11.2l-11.2 -11.2zM269.8 276.7l11.2 11.2l-11.2 11.2l-11.2 -11.2zM269.8 299.1l11.2 11.2l-11.2 11.2l-11.2 -11.2zM269.8 321.5l11.2 11.2l-11.2 11.2l-11.2 -11.2zM269.8 343.9l11.2 11.2l-11.2 11.2l-11.2 -11.2zM269.8 366.3l11.2 11.2l-11.2 11.2l-11.2 -11.2zM269.8 388.7l11.2 11.2l-11.2 11.2l-11.2 -11.2zM269.8 411.1l11.2 11.2l-11.2 11.2l-11.2 -11.2zM269.8 433.5l11.2 11.2l-11.2 11.2l-11.2 -11.2zM269.8 455.9l11.2 11.2l-11.2 11.2l-11.2 -11.2zM292.2 455.9l11.2 11.2l-11.2 11.2l-11.2 -11.2zM314.6 455.9l11.2 11.2l-11.2 11.2l-11.2 -11.2zM337 455.9l11.2 11.2l-11.2 11.2l-11.2 -11.2zM359.4 455.9l11.2 11.2l-11.2 11.2l-11.2 -11.2zM381.8 455.9l11.2 11.2l-11.2 11.2l-11.2 -11.2zM404.2 455.9l11.2 11.2l-11.2 11.2l-11.2 -11.2zM426.6 455.9l11.2 11.2l-11.2 11.2l-11.2 -11.2zM449 455.9l11.2 11.2l-11.2 11.2l-11.2 -11.2zM471.4 455.9l11.2 11.2l-11.2 11.2l-11.2 -11.2zM505 198.3l11.2 11.2l-11.2 11.2l-11.2 -11.2zM493.8 209.5l11.2 11.2l-11.2 11.2l-11.2 -11.2zM493.8 231.9l11.2 11.2l-11.2 11.2l-11.2 -11.2zM493.8 254.3l11.2 11.2l-11.2 11.2l-11.2 -11.2zM493.8 276.7l11.2 11.2l-11.2 11.2l-11.2 -11.2zM493.8 299.1l11.2 11.2l-11.2 11.2l-11.2 -11.2zM493.8 321.5l11.2 11.2l-11.2 11.2l-11.2 -11.2zM493.8 343.9l11.2 11.2l-11.2 11.2l-11.2 -11.2zM493.8 366.3l11.2 11.2l-11.2 11.2l-11.2 -11.2zM493.8 388.7l11.2 11.2l-11.2 11.2l-11.2 -11.2zM493.8 411.1l11.2 11.2l-11.2 11.2l-11.2 -11.2zM493.8 433.5l11.2 11.2l-11.2 11.2l-11.2 -11.2zM493.8 455.9l11.2 11.2l-11.2 11.2l-11.2 -11.2zM516.2 187.1l11.2 11.2l-11.2 11.2l-11.2 -11.2zM538.6 187.1l11.2 11.2l-11.2 11.2l-11.2 -11.2zM561 187.1l11.2 11.2l-11.2 11.2l-11.2 -11.2zM583.4 187.1l11.2 11.2l-11.2 11.2l-11.2 -11.2zM605.8 187.1l11.2 11.2l-11.2 11.2l-11.2 -11.2zM628.2 187.1l11.2 11.2l-11.2 11.2l-11.2 -11.2zM650.6 187.1l11.2 11.2l-11.2 11.2l-11.2 -11.2zM673 187.1l11.2 11.2l-11.2 11.2l-11.2 -11.2zM695.4 187.1l11.2 11.2l-11.2 11.2l-11.2 -11.2zM717.8 187.1l11.2 11.2l-11.2 11.2l-11.2 -11.2zM740.2 187.1l11.2 11.2l-11.2 11.2l-11.2 -11.2zM762.6 187.1l11.2 11.2l-11.2 11.2l-11.2 -11.2zM785 187.1l11.2 11.2l-11.2 11.2l-11.2 -11.2zM807.4 187.1l11.2 11.2l-11.2 11.2l-11.2 -11.2zM829.8 187.1l11.2 11.2l-11.2 11.2l-11.2 -11.2zM852.2 187.1l11.2 11.2l-11.2 11.2l-11.2 -11.2zM874.6 187.1l11.2 11.2l-11.2 11.2l-11.2 -11.2zM897 187.1l11.2 11.2l-11.2 11.2l-11.2 -11.2zM919.4 187.1l11.2 11.2l-11.2 11.2l-11.2 -11.2zM941.8 187.1l11.2 11.2l-11.2 11.2l-11.2 -11.2zM964.2 187.1l11.2 11.2l-11.2 11.2l-11.2 -11.2zM986.6 187.1l11.2 11.2l-11.2 11.2l-11.2 -11.2zM1009 187.1l11.2 11.2l-11.2 11.2l-11.2 -11.2zM1031.4 187.1l11.2 11.2l-11.2 11.2l-11.2 -11.2zM1053.8 187.1l11.2 11.2l-11.2 11.2l-11.2 -11.2zM1076.2 187.1l11.2 11.2l-11.2 11.2l-11.2 -11.2zM1098.6 187.1l11.2 11.2l-11.2 11.2l-11.2 -11.2zM1121 187.1l11.2 11.2l-11.2 11.2l-11.2 -11.2zM1132.2 198.3l11.2 11.2l-11.2 11.2l-11.2 -11.2zM1132.2 220.7l11.2 11.2l-11.2 11.2l-11.2 -11.2z" fill="#4e0c3e"/><path d="M101.8 198.3l11.2 11.2l-11.2 11.2l-11.2 -11.2zM101.8 220.7l11.2 11.2l-11.2 11.2l-11.2 -11.2zM124.2 198.3l11.2 11.2l-11.2 11.2l-11.2 -11.2zM113 209.5l11.2 11.2l-11.2 11.2l-11.2 -11.2zM124.2 220.7l11.2 11.2l-11.2 11.2l-11.2 -11.2zM146.6 198.3l11.2 11.2l-11.2 11.2l-11.2 -11.2zM135.4 209.5l11.2 11.2l-11.2 11.2l-11.2 -11.2zM146.6 220.7l11.2 11.2l-11.2 11.2l-11.2 -11.2zM169 198.3l11.2 11.2l-11.2 11.2l-11.2 -11.2zM157.8 209.5l11.2 11.2l-11.2 11.2l-11.2 -11.2zM169 220.7l11.2 11.2l-11.2 11.2l-11.2 -11.2zM191.4 198.3l11.2 11.2l-11.2 11.2l-11.2 -11.2zM180.2 209.5l11.2 11.2l-11.2 11.2l-11.2 -11.2zM191.4 220.7l11.2 11.2l-11.2 11.2l-11.2 -11.2zM213.8 198.3l11.2 11.2l-11.2 11.2l-11.2 -11.2zM202.6 209.5l11.2 11.2l-11.2 11.2l-11.2 -11.2zM213.8 220.7l11.2 11.2l-11.2 11.2l-11.2 -11.2zM236.2 198.3l11.2 11.2l-11.2 11.2l-11.2 -11.2zM225 209.5l11.2 11.2l-11.2 11.2l-11.2 -11.2zM236.2 220.7l11.2 11.2l-11.2 11.2l-11.2 -11.2zM236.2 243.1l11.2 11.2l-11.2 11.2l-11.2 -11.2zM236.2 265.5l11.2 11.2l-11.2 11.2l-11.2 -11.2zM236.2 287.9l11.2 11.2l-11.2 11.2l-11.2 -11.2zM236.2 310.3l11.2 11.2l-11.2 11.2l-11.2 -11.2zM236.2 332.7l11.2 11.2l-11.2 11.2l-11.2 -11.2zM236.2 355.1l11.2 11.2l-11.2 11.2l-11.2 -11.2zM236.2 377.5l11.2 11.2l-11.2 11.2l-11.2 -11.2zM236.2 399.9l11.2 11.2l-11.2 11.2l-11.2 -11.2zM236.2 422.3l11.2 11.2l-11.2 11.2l-11.2 -11.2zM236.2 444.7l11.2 11.2l-11.2 11.2l-11.2 -11.2zM236.2 467.1l11.2 11.2l-11.2 11.2l-11.2 -11.2zM247.4 209.5l11.2 11.2l-11.2 11.2l-11.2 -11.2zM258.6 220.7l11.2 11.2l-11.2 11.2l-11.2 -11.2zM247.4 231.9l11.2 11.2l-11.2 11.2l-11.2 -11.2zM258.6 243.1l11.2 11.2l-11.2 11.2l-11.2 -11.2zM247.4 254.3l11.2 11.2l-11.2 11.2l-11.2 -11.2zM258.6 265.5l11.2 11.2l-11.2 11.2l-11.2 -11.2zM247.4 276.7l11.2 11.2l-11.2 11.2l-11.2 -11.2zM258.6 287.9l11.2 11.2l-11.2 11.2l-11.2 -11.2zM247.4 299.1l11.2 11.2l-11.2 11.2l-11.2 -11.2zM258.6 310.3l11.2 11.2l-11.2 11.2l-11.2 -11.2zM247.4 321.5l11.2 11.2l-11.2 11.2l-11.2 -11.2zM258.6 332.7l11.2 11.2l-11.2 11.2l-11.2 -11.2zM247.4 343.9l11.2 11.2l-11.2 11.2l-11.2 -11.2zM258.6 355.1l11.2 11.2l-11.2 11.2l-11.2 -11.2zM247.4 366.3l11.2 11.2l-11.2 11.2l-11.2 -11.2zM258.6 377.5l11.2 11.2l-11.2 11.2l-11.2 -11.2zM247.4 388.7l11.2 11.2l-11.2 11.2l-11.2 -11.2zM258.6 399.9l11.2 11.2l-11.2 11.2l-11.2 -11.2zM247.4 411.1l11.2 11.2l-11.2 11.2l-11.2 -11.2zM258.6 422.3l11.2 11.2l-11.2 11.2l-11.2 -11.2zM247.4 433.5l11.2 11.2l-11.2 11.2l-11.2 -11.2zM258.6 444.7l11.2 11.2l-11.2 11.2l-11.2 -11.2zM247.4 455.9l11.2 11.2l-11.2 11.2l-11.2 -11.2zM258.6 467.1l11.2 11.2l-11.2 11.2l-11.2 -11.2zM247.4 478.3l11.2 11.2l-11.2 11.2l-11.2 -11.2zM281 467.1l11.2 11.2l-11.2 11.2l-11.2 -11.2zM269.8 478.3l11.2 11.2l-11.2 11.2l-11.2 -11.2zM303.4 467.1l11.2 11.2l-11.2 11.2l-11.2 -11.2zM292.2 478.3l11.2 11.2l-11.2 11.2l-11.2 -11.2zM325.8 467.1l11.2 11.2l-11.2 11.2l-11.2 -11.2zM314.6 478.3l11.2 11.2l-11.2 11.2l-11.2 -11.2zM348.2 467.1l11.2 11.2l-11.2 11.2l-11.2 -11.2zM337 478.3l11.2 11.2l-11.2 11.2l-11.2 -11.2zM370.6 467.1l11.2 11.2l-11.2 11.2l-11.2 -11.2zM359.4 478.3l11.2 11.2l-11.2 11.2l-11.2 -11.2zM393 467.1l11.2 11.2l-11.2 11.2l-11.2 -11.2zM381.8 478.3l11.2 11.2l-11.2 11.2l-11.2 -11.2zM415.4 467.1l11.2 11.2l-11.2 11.2l-11.2 -11.2zM404.2 478.3l11.2 11.2l-11.2 11.2l-11.2 -11.2zM437.8 467.1l11.2 11.2l-11.2 11.2l-11.2 -11.2zM426.6 478.3l11.2 11.2l-11.2 11.2l-11.2 -11.2zM460.2 467.1l11.2 11.2l-11.2 11.2l-11.2 -11.2zM449 478.3l11.2 11.2l-11.2 11.2l-11.2 -11.2zM482.6 467.1l11.2 11.2l-11.2 11.2l-11.2 -11.2zM471.4 478.3l11.2 11.2l-11.2 11.2l-11.2 -11.2zM505 220.7l11.2 11.2l-11.2 11.2l-11.2 -11.2zM505 243.1l11.2 11.2l-11.2 11.2l-11.2 -11.2zM505 265.5l11.2 11.2l-11.2 11.2l-11.2 -11.2zM505 287.9l11.2 11.2l-11.2 11.2l-11.2 -11.2zM505 310.3l11.2 11.2l-11.2 11.2l-11.2 -11.2zM505 332.7l11.2 11.2l-11.2 11.2l-11.2 -11.2zM505 355.1l11.2 11.2l-11.2 11.2l-11.2 -11.2zM505 377.5l11.2 11.2l-11.2 11.2l-11.2 -11.2zM505 399.9l11.2 11.2l-11.2 11.2l-11.2 -11.2zM505 422.3l11.2 11.2l-11.2 11.2l-11.2 -11.2zM505 444.7l11.2 11.2l-11.2 11.2l-11.2 -11.2zM505 467.1l11.2 11.2l-11.2 11.2l-11.2 -11.2zM493.8 478.3l11.2 11.2l-11.2 11.2l-11.2 -11.2zM527.4 198.3l11.2 11.2l-11.2 11.2l-11.2 -11.2zM516.2 209.5l11.2 11.2l-11.2 11.2l-11.2 -11.2zM527.4 220.7l11.2 11.2l-11.2 11.2l-11.2 -11.2zM516.2 231.9l11.2 11.2l-11.2 11.2l-11.2 -11.2zM527.4 243.1l11.2 11.2l-11.2 11.2l-11.2 -11.2zM516.2 254.3l11.2 11.2l-11.2 11.2l-11.2 -11.2zM527.4 265.5l11.2 11.2l-11.2 11.2l-11.2 -11.2zM516.2 276.7l11.2 11.2l-11.2 11.2l-11.2 -11.2zM527.4 287.9l11.2 11.2l-11.2 11.2l-11.2 -11.2zM516.2 299.1l11.2 11.2l-11.2 11.2l-11.2 -11.2zM527.4 310.3l11.2 11.2l-11.2 11.2l-11.2 -11.2zM516.2 321.5l11.2 11.2l-11.2 11.2l-11.2 -11.2zM527.4 332.7l11.2 11.2l-11.2 11.2l-11.2 -11.2zM516.2 343.9l11.2 11.2l-11.2 11.2l-11.2 -11.2zM527.4 355.1l11.2 11.2l-11.2 11.2l-11.2 -11.2zM516.2 366.3l11.2 11.2l-11.2 11.2l-11.2 -11.2zM527.4 377.5l11.2 11.2l-11.2 11.2l-11.2 -11.2zM516.2 388.7l11.2 11.2l-11.2 11.2l-11.2 -11.2zM527.4 399.9l11.2 11.2l-11.2 11.2l-11.2 -11.2zM516.2 411.1l11.2 11.2l-11.2 11.2l-11.2 -11.2zM527.4 422.3l11.2 11.2l-11.2 11.2l-11.2 -11.2zM516.2 433.5l11.2 11.2l-11.2 11.2l-11.2 -11.2zM527.4 444.7l11.2 11.2l-11.2 11.2l-11.2 -11.2zM516.2 455.9l11.2 11.2l-11.2 11.2l-11.2 -11.2zM527.4 467.1l11.2 11.2l-11.2 11.2l-11.2 -11.2zM516.2 478.3l11.2 11.2l-11.2 11.2l-11.2 -11.2zM549.8 198.3l11.2 11.2l-11.2 11.2l-11.2 -11.2zM538.6 209.5l11.2 11.2l-11.2 11.2l-11.2 -11.2zM549.8 220.7l11.2 11.2l-11.2 11.2l-11.2 -11.2zM572.2 198.3l11.2 11.2l-11.2 11.2l-11.2 -11.2zM561 209.5l11.2 11.2l-11.2 11.2l-11.2 -11.2zM572.2 220.7l11.2 11.2l-11.2 11.2l-11.2 -11.2zM594.6 198.3l11.2 11.2l-11.2 11.2l-11.2 -11.2zM583.4 209.5l11.2 11.2l-11.2 11.2l-11.2 -11.2zM594.6 220.7l11.2 11.2l-11.2 11.2l-11.2 -11.2zM617 198.3l11.2 11.2l-11.2 11.2l-11.2 -11.2zM605.8 209.5l11.2 11.2l-11.2 11.2l-11.2 -11.2zM617 220.7l11.2 11.2l-11.2 11.2l-11.2 -11.2zM639.4 198.3l11.2 11.2l-11.2 11.2l-11.2 -11.2zM628.2 209.5l11.2 11.2l-11.2 11.2l-11.2 -11.2zM639.4 220.7l11.2 11.2l-11.2 11.2l-11.2 -11.2zM661.8 198.3l11.2 11.2l-11.2 11.2l-11.2 -11.2zM650.6 209.5l11.2 11.2l-11.2 11.2l-11.2 -11.2zM661.8 220.7l11.2 11.2l-11.2 11.2l-11.2 -11.2zM684.2 198.3l11.2 11.2l-11.2 11.2l-11.2 -11.2zM673 209.5l11.2 11.2l-11.2 11.2l-11.2 -11.2zM684.2 220.7l11.2 11.2l-11.2 11.2l-11.2 -11.2zM706.6 198.3l11.2 11.2l-11.2 11.2l-11.2 -11.2zM695.4 209.5l11.2 11.2l-11.2 11.2l-11.2 -11.2zM706.6 220.7l11.2 11.2l-11.2 11.2l-11.2 -11.2zM729 198.3l11.2 11.2l-11.2 11.2l-11.2 -11.2zM717.8 209.5l11.2 11.2l-11.2 11.2l-11.2 -11.2zM729 220.7l11.2 11.2l-11.2 11.2l-11.2 -11.2zM751.4 198.3l11.2 11.2l-11.2 11.2l-11.2 -11.2zM740.2 209.5l11.2 11.2l-11.2 11.2l-11.2 -11.2zM751.4 220.7l11.2 11.2l-11.2 11.2l-11.2 -11.2zM773.8 198.3l11.2 11.2l-11.2 11.2l-11.2 -11.2zM762.6 209.5l11.2 11.2l-11.2 11.2l-11.2 -11.2zM773.8 220.7l11.2 11.2l-11.2 11.2l-11.2 -11.2zM796.2 198.3l11.2 11.2l-11.2 11.2l-11.2 -11.2zM785 209.5l11.2 11.2l-11.2 11.2l-11.2 -11.2zM796.2 220.7l11.2 11.2l-11.2 11.2l-11.2 -11.2zM818.6 198.3l11.2 11.2l-11.2 11.2l-11.2 -11.2zM807.4 209.5l11.2 11.2l-11.2 11.2l-11.2 -11.2zM818.6 220.7l11.2 11.2l-11.2 11.2l-11.2 -11.2zM841 198.3l11.2 11.2l-11.2 11.2l-11.2 -11.2zM829.8 209.5l11.2 11.2l-11.2 11.2l-11.2 -11.2zM841 220.7l11.2 11.2l-11.2 11.2l-11.2 -11.2zM863.4 198.3l11.2 11.2l-11.2 11.2l-11.2 -11.2zM852.2 209.5l11.2 11.2l-11.2 11.2l-11.2 -11.2zM863.4 220.7l11.2 11.2l-11.2 11.2l-11.2 -11.2zM885.8 198.3l11.2 11.2l-11.2 11.2l-11.2 -11.2zM874.6 209.5l11.2 11.2l-11.2 11.2l-11.2 -11.2zM885.8 220.7l11.2 11.2l-11.2 11.2l-11.2 -11.2zM908.2 198.3l11.2 11.2l-11.2 11.2l-11.2 -11.2zM897 209.5l11.2 11.2l-11.2 11.2l-11.2 -11.2zM908.2 220.7l11.2 11.2l-11.2 11.2l-11.2 -11.2zM930.6 198.3l11.2 11.2l-11.2 11.2l-11.2 -11.2zM919.4 209.5l11.2 11.2l-11.2 11.2l-11.2 -11.2zM930.6 220.7l11.2 11.2l-11.2 11.2l-11.2 -11.2zM953 198.3l11.2 11.2l-11.2 11.2l-11.2 -11.2zM941.8 209.5l11.2 11.2l-11.2 11.2l-11.2 -11.2zM953 220.7l11.2 11.2l-11.2 11.2l-11.2 -11.2zM975.4 198.3l11.2 11.2l-11.2 11.2l-11.2 -11.2zM964.2 209.5l11.2 11.2l-11.2 11.2l-11.2 -11.2zM975.4 220.7l11.2 11.2l-11.2 11.2l-11.2 -11.2zM997.8 198.3l11.2 11.2l-11.2 11.2l-11.2 -11.2zM986.6 209.5l11.2 11.2l-11.2 11.2l-11.2 -11.2zM997.8 220.7l11.2 11.2l-11.2 11.2l-11.2 -11.2zM1020.2 198.3l11.2 11.2l-11.2 11.2l-11.2 -11.2zM1009 209.5l11.2 11.2l-11.2 11.2l-11.2 -11.2zM1020.2 220.7l11.2 11.2l-11.2 11.2l-11.2 -11.2zM1042.6 198.3l11.2 11.2l-11.2 11.2l-11.2 -11.2zM1031.4 209.5l11.2 11.2l-11.2 11.2l-11.2 -11.2zM1042.6 220.7l11.2 11.2l-11.2 11.2l-11.2 -11.2zM1065 198.3l11.2 11.2l-11.2 11.2l-11.2 -11.2zM1053.8 209.5l11.2 11.2l-11.2 11.2l-11.2 -11.2zM1065 220.7l11.2 11.2l-11.2 11.2l-11.2 -11.2zM1087.4 198.3l11.2 11.2l-11.2 11.2l-11.2 -11.2zM1076.2 209.5l11.2 11.2l-11.2 11.2l-11.2 -11.2zM1087.4 220.7l11.2 11.2l-11.2 11.2l-11.2 -11.2zM1109.8 198.3l11.2 11.2l-11.2 11.2l-11.2 -11.2zM1098.6 209.5l11.2 11.2l-11.2 11.2l-11.2 -11.2zM1109.8 220.7l11.2 11.2l-11.2 11.2l-11.2 -11.2zM1121 209.5l11.2 11.2l-11.2 11.2l-11.2 -11.2z" fill="#33072a"/></g>
<g clip-path="url(#cBot)"><path d="M135.4 702.3l11.2 11.2l-11.2 11.2l-11.2 -11.2zM135.4 724.7l11.2 11.2l-11.2 11.2l-11.2 -11.2zM135.4 769.5l11.2 11.2l-11.2 11.2l-11.2 -11.2zM157.8 702.3l11.2 11.2l-11.2 11.2l-11.2 -11.2zM157.8 724.7l11.2 11.2l-11.2 11.2l-11.2 -11.2zM157.8 769.5l11.2 11.2l-11.2 11.2l-11.2 -11.2zM202.6 702.3l11.2 11.2l-11.2 11.2l-11.2 -11.2zM202.6 724.7l11.2 11.2l-11.2 11.2l-11.2 -11.2zM202.6 769.5l11.2 11.2l-11.2 11.2l-11.2 -11.2zM225 702.3l11.2 11.2l-11.2 11.2l-11.2 -11.2zM225 724.7l11.2 11.2l-11.2 11.2l-11.2 -11.2zM225 769.5l11.2 11.2l-11.2 11.2l-11.2 -11.2zM269.8 702.3l11.2 11.2l-11.2 11.2l-11.2 -11.2zM269.8 724.7l11.2 11.2l-11.2 11.2l-11.2 -11.2zM269.8 769.5l11.2 11.2l-11.2 11.2l-11.2 -11.2zM292.2 702.3l11.2 11.2l-11.2 11.2l-11.2 -11.2zM292.2 724.7l11.2 11.2l-11.2 11.2l-11.2 -11.2zM292.2 769.5l11.2 11.2l-11.2 11.2l-11.2 -11.2zM337 702.3l11.2 11.2l-11.2 11.2l-11.2 -11.2zM337 724.7l11.2 11.2l-11.2 11.2l-11.2 -11.2zM337 769.5l11.2 11.2l-11.2 11.2l-11.2 -11.2zM359.4 702.3l11.2 11.2l-11.2 11.2l-11.2 -11.2zM359.4 724.7l11.2 11.2l-11.2 11.2l-11.2 -11.2zM359.4 769.5l11.2 11.2l-11.2 11.2l-11.2 -11.2zM404.2 702.3l11.2 11.2l-11.2 11.2l-11.2 -11.2zM404.2 724.7l11.2 11.2l-11.2 11.2l-11.2 -11.2zM404.2 769.5l11.2 11.2l-11.2 11.2l-11.2 -11.2zM426.6 702.3l11.2 11.2l-11.2 11.2l-11.2 -11.2zM426.6 724.7l11.2 11.2l-11.2 11.2l-11.2 -11.2zM426.6 769.5l11.2 11.2l-11.2 11.2l-11.2 -11.2zM471.4 702.3l11.2 11.2l-11.2 11.2l-11.2 -11.2zM471.4 724.7l11.2 11.2l-11.2 11.2l-11.2 -11.2zM471.4 769.5l11.2 11.2l-11.2 11.2l-11.2 -11.2zM493.8 702.3l11.2 11.2l-11.2 11.2l-11.2 -11.2zM493.8 724.7l11.2 11.2l-11.2 11.2l-11.2 -11.2zM493.8 769.5l11.2 11.2l-11.2 11.2l-11.2 -11.2zM538.6 702.3l11.2 11.2l-11.2 11.2l-11.2 -11.2zM538.6 724.7l11.2 11.2l-11.2 11.2l-11.2 -11.2zM538.6 769.5l11.2 11.2l-11.2 11.2l-11.2 -11.2zM561 702.3l11.2 11.2l-11.2 11.2l-11.2 -11.2zM561 724.7l11.2 11.2l-11.2 11.2l-11.2 -11.2zM561 769.5l11.2 11.2l-11.2 11.2l-11.2 -11.2zM605.8 702.3l11.2 11.2l-11.2 11.2l-11.2 -11.2zM605.8 724.7l11.2 11.2l-11.2 11.2l-11.2 -11.2zM605.8 769.5l11.2 11.2l-11.2 11.2l-11.2 -11.2zM628.2 702.3l11.2 11.2l-11.2 11.2l-11.2 -11.2zM628.2 724.7l11.2 11.2l-11.2 11.2l-11.2 -11.2zM628.2 769.5l11.2 11.2l-11.2 11.2l-11.2 -11.2zM673 702.3l11.2 11.2l-11.2 11.2l-11.2 -11.2zM673 724.7l11.2 11.2l-11.2 11.2l-11.2 -11.2zM673 769.5l11.2 11.2l-11.2 11.2l-11.2 -11.2zM695.4 702.3l11.2 11.2l-11.2 11.2l-11.2 -11.2zM695.4 724.7l11.2 11.2l-11.2 11.2l-11.2 -11.2zM695.4 769.5l11.2 11.2l-11.2 11.2l-11.2 -11.2zM740.2 702.3l11.2 11.2l-11.2 11.2l-11.2 -11.2zM740.2 724.7l11.2 11.2l-11.2 11.2l-11.2 -11.2zM740.2 769.5l11.2 11.2l-11.2 11.2l-11.2 -11.2zM762.6 702.3l11.2 11.2l-11.2 11.2l-11.2 -11.2zM762.6 724.7l11.2 11.2l-11.2 11.2l-11.2 -11.2zM762.6 769.5l11.2 11.2l-11.2 11.2l-11.2 -11.2zM807.4 702.3l11.2 11.2l-11.2 11.2l-11.2 -11.2zM807.4 724.7l11.2 11.2l-11.2 11.2l-11.2 -11.2zM807.4 769.5l11.2 11.2l-11.2 11.2l-11.2 -11.2zM829.8 702.3l11.2 11.2l-11.2 11.2l-11.2 -11.2zM829.8 724.7l11.2 11.2l-11.2 11.2l-11.2 -11.2zM829.8 769.5l11.2 11.2l-11.2 11.2l-11.2 -11.2zM874.6 702.3l11.2 11.2l-11.2 11.2l-11.2 -11.2zM874.6 724.7l11.2 11.2l-11.2 11.2l-11.2 -11.2zM874.6 769.5l11.2 11.2l-11.2 11.2l-11.2 -11.2zM897 702.3l11.2 11.2l-11.2 11.2l-11.2 -11.2zM897 724.7l11.2 11.2l-11.2 11.2l-11.2 -11.2zM897 769.5l11.2 11.2l-11.2 11.2l-11.2 -11.2zM941.8 702.3l11.2 11.2l-11.2 11.2l-11.2 -11.2zM941.8 724.7l11.2 11.2l-11.2 11.2l-11.2 -11.2zM941.8 769.5l11.2 11.2l-11.2 11.2l-11.2 -11.2zM964.2 702.3l11.2 11.2l-11.2 11.2l-11.2 -11.2zM964.2 724.7l11.2 11.2l-11.2 11.2l-11.2 -11.2zM964.2 769.5l11.2 11.2l-11.2 11.2l-11.2 -11.2zM1009 702.3l11.2 11.2l-11.2 11.2l-11.2 -11.2zM1009 724.7l11.2 11.2l-11.2 11.2l-11.2 -11.2zM1009 769.5l11.2 11.2l-11.2 11.2l-11.2 -11.2zM1031.4 702.3l11.2 11.2l-11.2 11.2l-11.2 -11.2zM1031.4 724.7l11.2 11.2l-11.2 11.2l-11.2 -11.2zM1031.4 769.5l11.2 11.2l-11.2 11.2l-11.2 -11.2zM1076.2 702.3l11.2 11.2l-11.2 11.2l-11.2 -11.2zM1076.2 724.7l11.2 11.2l-11.2 11.2l-11.2 -11.2zM1076.2 769.5l11.2 11.2l-11.2 11.2l-11.2 -11.2zM1098.6 702.3l11.2 11.2l-11.2 11.2l-11.2 -11.2zM1098.6 724.7l11.2 11.2l-11.2 11.2l-11.2 -11.2zM1098.6 769.5l11.2 11.2l-11.2 11.2l-11.2 -11.2zM1143.4 702.3l11.2 11.2l-11.2 11.2l-11.2 -11.2zM1143.4 724.7l11.2 11.2l-11.2 11.2l-11.2 -11.2zM1143.4 769.5l11.2 11.2l-11.2 11.2l-11.2 -11.2zM1165.8 657.5l11.2 11.2l-11.2 11.2l-11.2 -11.2zM1165.8 702.3l11.2 11.2l-11.2 11.2l-11.2 -11.2zM1165.8 724.7l11.2 11.2l-11.2 11.2l-11.2 -11.2zM1165.8 769.5l11.2 11.2l-11.2 11.2l-11.2 -11.2z" fill="#9a1f78"/><path d="M113 635.1l11.2 11.2l-11.2 11.2l-11.2 -11.2zM135.4 635.1l11.2 11.2l-11.2 11.2l-11.2 -11.2zM157.8 635.1l11.2 11.2l-11.2 11.2l-11.2 -11.2zM180.2 635.1l11.2 11.2l-11.2 11.2l-11.2 -11.2zM202.6 635.1l11.2 11.2l-11.2 11.2l-11.2 -11.2zM225 635.1l11.2 11.2l-11.2 11.2l-11.2 -11.2zM247.4 635.1l11.2 11.2l-11.2 11.2l-11.2 -11.2zM269.8 635.1l11.2 11.2l-11.2 11.2l-11.2 -11.2zM292.2 635.1l11.2 11.2l-11.2 11.2l-11.2 -11.2zM314.6 635.1l11.2 11.2l-11.2 11.2l-11.2 -11.2zM337 635.1l11.2 11.2l-11.2 11.2l-11.2 -11.2zM359.4 635.1l11.2 11.2l-11.2 11.2l-11.2 -11.2zM381.8 635.1l11.2 11.2l-11.2 11.2l-11.2 -11.2zM404.2 635.1l11.2 11.2l-11.2 11.2l-11.2 -11.2zM426.6 635.1l11.2 11.2l-11.2 11.2l-11.2 -11.2zM449 635.1l11.2 11.2l-11.2 11.2l-11.2 -11.2zM471.4 635.1l11.2 11.2l-11.2 11.2l-11.2 -11.2zM493.8 635.1l11.2 11.2l-11.2 11.2l-11.2 -11.2zM516.2 635.1l11.2 11.2l-11.2 11.2l-11.2 -11.2zM538.6 635.1l11.2 11.2l-11.2 11.2l-11.2 -11.2zM561 635.1l11.2 11.2l-11.2 11.2l-11.2 -11.2zM583.4 635.1l11.2 11.2l-11.2 11.2l-11.2 -11.2zM605.8 635.1l11.2 11.2l-11.2 11.2l-11.2 -11.2zM628.2 635.1l11.2 11.2l-11.2 11.2l-11.2 -11.2zM650.6 635.1l11.2 11.2l-11.2 11.2l-11.2 -11.2zM673 635.1l11.2 11.2l-11.2 11.2l-11.2 -11.2zM695.4 635.1l11.2 11.2l-11.2 11.2l-11.2 -11.2zM717.8 635.1l11.2 11.2l-11.2 11.2l-11.2 -11.2zM740.2 635.1l11.2 11.2l-11.2 11.2l-11.2 -11.2zM762.6 635.1l11.2 11.2l-11.2 11.2l-11.2 -11.2zM785 635.1l11.2 11.2l-11.2 11.2l-11.2 -11.2zM807.4 635.1l11.2 11.2l-11.2 11.2l-11.2 -11.2zM829.8 635.1l11.2 11.2l-11.2 11.2l-11.2 -11.2zM852.2 635.1l11.2 11.2l-11.2 11.2l-11.2 -11.2zM874.6 635.1l11.2 11.2l-11.2 11.2l-11.2 -11.2zM897 635.1l11.2 11.2l-11.2 11.2l-11.2 -11.2zM919.4 635.1l11.2 11.2l-11.2 11.2l-11.2 -11.2zM941.8 635.1l11.2 11.2l-11.2 11.2l-11.2 -11.2zM964.2 635.1l11.2 11.2l-11.2 11.2l-11.2 -11.2zM986.6 635.1l11.2 11.2l-11.2 11.2l-11.2 -11.2zM1009 635.1l11.2 11.2l-11.2 11.2l-11.2 -11.2zM1031.4 635.1l11.2 11.2l-11.2 11.2l-11.2 -11.2zM1053.8 635.1l11.2 11.2l-11.2 11.2l-11.2 -11.2zM1076.2 635.1l11.2 11.2l-11.2 11.2l-11.2 -11.2zM1098.6 635.1l11.2 11.2l-11.2 11.2l-11.2 -11.2zM1132.2 623.9l11.2 11.2l-11.2 11.2l-11.2 -11.2zM1121 635.1l11.2 11.2l-11.2 11.2l-11.2 -11.2zM1143.4 366.3l11.2 11.2l-11.2 11.2l-11.2 -11.2zM1143.4 388.7l11.2 11.2l-11.2 11.2l-11.2 -11.2zM1143.4 411.1l11.2 11.2l-11.2 11.2l-11.2 -11.2zM1143.4 433.5l11.2 11.2l-11.2 11.2l-11.2 -11.2zM1143.4 455.9l11.2 11.2l-11.2 11.2l-11.2 -11.2zM1143.4 478.3l11.2 11.2l-11.2 11.2l-11.2 -11.2zM1143.4 500.7l11.2 11.2l-11.2 11.2l-11.2 -11.2zM1143.4 523.1l11.2 11.2l-11.2 11.2l-11.2 -11.2zM1143.4 545.5l11.2 11.2l-11.2 11.2l-11.2 -11.2zM1143.4 567.9l11.2 11.2l-11.2 11.2l-11.2 -11.2zM1143.4 590.3l11.2 11.2l-11.2 11.2l-11.2 -11.2zM1143.4 612.7l11.2 11.2l-11.2 11.2l-11.2 -11.2zM1165.8 366.3l11.2 11.2l-11.2 11.2l-11.2 -11.2zM1188.2 366.3l11.2 11.2l-11.2 11.2l-11.2 -11.2z" fill="#4e0c3e"/><path d="M101.8 623.9l11.2 11.2l-11.2 11.2l-11.2 -11.2zM113 612.7l11.2 11.2l-11.2 11.2l-11.2 -11.2zM124.2 623.9l11.2 11.2l-11.2 11.2l-11.2 -11.2zM135.4 612.7l11.2 11.2l-11.2 11.2l-11.2 -11.2zM146.6 623.9l11.2 11.2l-11.2 11.2l-11.2 -11.2zM157.8 612.7l11.2 11.2l-11.2 11.2l-11.2 -11.2zM169 623.9l11.2 11.2l-11.2 11.2l-11.2 -11.2zM180.2 612.7l11.2 11.2l-11.2 11.2l-11.2 -11.2zM191.4 623.9l11.2 11.2l-11.2 11.2l-11.2 -11.2zM202.6 612.7l11.2 11.2l-11.2 11.2l-11.2 -11.2zM213.8 623.9l11.2 11.2l-11.2 11.2l-11.2 -11.2zM225 612.7l11.2 11.2l-11.2 11.2l-11.2 -11.2zM236.2 623.9l11.2 11.2l-11.2 11.2l-11.2 -11.2zM247.4 612.7l11.2 11.2l-11.2 11.2l-11.2 -11.2zM258.6 623.9l11.2 11.2l-11.2 11.2l-11.2 -11.2zM269.8 612.7l11.2 11.2l-11.2 11.2l-11.2 -11.2zM281 623.9l11.2 11.2l-11.2 11.2l-11.2 -11.2zM292.2 612.7l11.2 11.2l-11.2 11.2l-11.2 -11.2zM303.4 623.9l11.2 11.2l-11.2 11.2l-11.2 -11.2zM314.6 612.7l11.2 11.2l-11.2 11.2l-11.2 -11.2zM325.8 623.9l11.2 11.2l-11.2 11.2l-11.2 -11.2zM337 612.7l11.2 11.2l-11.2 11.2l-11.2 -11.2zM348.2 623.9l11.2 11.2l-11.2 11.2l-11.2 -11.2zM359.4 612.7l11.2 11.2l-11.2 11.2l-11.2 -11.2zM370.6 623.9l11.2 11.2l-11.2 11.2l-11.2 -11.2zM381.8 612.7l11.2 11.2l-11.2 11.2l-11.2 -11.2zM393 623.9l11.2 11.2l-11.2 11.2l-11.2 -11.2zM404.2 612.7l11.2 11.2l-11.2 11.2l-11.2 -11.2zM415.4 623.9l11.2 11.2l-11.2 11.2l-11.2 -11.2zM426.6 612.7l11.2 11.2l-11.2 11.2l-11.2 -11.2zM437.8 623.9l11.2 11.2l-11.2 11.2l-11.2 -11.2zM449 612.7l11.2 11.2l-11.2 11.2l-11.2 -11.2zM460.2 623.9l11.2 11.2l-11.2 11.2l-11.2 -11.2zM471.4 612.7l11.2 11.2l-11.2 11.2l-11.2 -11.2zM482.6 623.9l11.2 11.2l-11.2 11.2l-11.2 -11.2zM493.8 612.7l11.2 11.2l-11.2 11.2l-11.2 -11.2zM505 623.9l11.2 11.2l-11.2 11.2l-11.2 -11.2zM516.2 612.7l11.2 11.2l-11.2 11.2l-11.2 -11.2zM527.4 623.9l11.2 11.2l-11.2 11.2l-11.2 -11.2zM538.6 612.7l11.2 11.2l-11.2 11.2l-11.2 -11.2zM549.8 623.9l11.2 11.2l-11.2 11.2l-11.2 -11.2zM561 612.7l11.2 11.2l-11.2 11.2l-11.2 -11.2zM572.2 623.9l11.2 11.2l-11.2 11.2l-11.2 -11.2zM583.4 612.7l11.2 11.2l-11.2 11.2l-11.2 -11.2zM594.6 623.9l11.2 11.2l-11.2 11.2l-11.2 -11.2zM605.8 612.7l11.2 11.2l-11.2 11.2l-11.2 -11.2zM617 623.9l11.2 11.2l-11.2 11.2l-11.2 -11.2zM628.2 612.7l11.2 11.2l-11.2 11.2l-11.2 -11.2zM639.4 623.9l11.2 11.2l-11.2 11.2l-11.2 -11.2zM650.6 612.7l11.2 11.2l-11.2 11.2l-11.2 -11.2zM661.8 623.9l11.2 11.2l-11.2 11.2l-11.2 -11.2zM673 612.7l11.2 11.2l-11.2 11.2l-11.2 -11.2zM684.2 623.9l11.2 11.2l-11.2 11.2l-11.2 -11.2zM695.4 612.7l11.2 11.2l-11.2 11.2l-11.2 -11.2zM706.6 623.9l11.2 11.2l-11.2 11.2l-11.2 -11.2zM717.8 612.7l11.2 11.2l-11.2 11.2l-11.2 -11.2zM729 623.9l11.2 11.2l-11.2 11.2l-11.2 -11.2zM740.2 612.7l11.2 11.2l-11.2 11.2l-11.2 -11.2zM751.4 623.9l11.2 11.2l-11.2 11.2l-11.2 -11.2zM762.6 612.7l11.2 11.2l-11.2 11.2l-11.2 -11.2zM773.8 623.9l11.2 11.2l-11.2 11.2l-11.2 -11.2zM785 612.7l11.2 11.2l-11.2 11.2l-11.2 -11.2zM796.2 623.9l11.2 11.2l-11.2 11.2l-11.2 -11.2zM807.4 612.7l11.2 11.2l-11.2 11.2l-11.2 -11.2zM818.6 623.9l11.2 11.2l-11.2 11.2l-11.2 -11.2zM829.8 612.7l11.2 11.2l-11.2 11.2l-11.2 -11.2zM841 623.9l11.2 11.2l-11.2 11.2l-11.2 -11.2zM852.2 612.7l11.2 11.2l-11.2 11.2l-11.2 -11.2zM863.4 623.9l11.2 11.2l-11.2 11.2l-11.2 -11.2zM874.6 612.7l11.2 11.2l-11.2 11.2l-11.2 -11.2zM885.8 623.9l11.2 11.2l-11.2 11.2l-11.2 -11.2zM897 612.7l11.2 11.2l-11.2 11.2l-11.2 -11.2zM908.2 623.9l11.2 11.2l-11.2 11.2l-11.2 -11.2zM919.4 612.7l11.2 11.2l-11.2 11.2l-11.2 -11.2zM930.6 623.9l11.2 11.2l-11.2 11.2l-11.2 -11.2zM941.8 612.7l11.2 11.2l-11.2 11.2l-11.2 -11.2zM953 623.9l11.2 11.2l-11.2 11.2l-11.2 -11.2zM964.2 612.7l11.2 11.2l-11.2 11.2l-11.2 -11.2zM975.4 623.9l11.2 11.2l-11.2 11.2l-11.2 -11.2zM986.6 612.7l11.2 11.2l-11.2 11.2l-11.2 -11.2zM997.8 623.9l11.2 11.2l-11.2 11.2l-11.2 -11.2zM1009 612.7l11.2 11.2l-11.2 11.2l-11.2 -11.2zM1020.2 623.9l11.2 11.2l-11.2 11.2l-11.2 -11.2zM1031.4 612.7l11.2 11.2l-11.2 11.2l-11.2 -11.2zM1042.6 623.9l11.2 11.2l-11.2 11.2l-11.2 -11.2zM1053.8 612.7l11.2 11.2l-11.2 11.2l-11.2 -11.2zM1065 623.9l11.2 11.2l-11.2 11.2l-11.2 -11.2zM1076.2 612.7l11.2 11.2l-11.2 11.2l-11.2 -11.2zM1087.4 623.9l11.2 11.2l-11.2 11.2l-11.2 -11.2zM1098.6 612.7l11.2 11.2l-11.2 11.2l-11.2 -11.2zM1109.8 623.9l11.2 11.2l-11.2 11.2l-11.2 -11.2zM1121 343.9l11.2 11.2l-11.2 11.2l-11.2 -11.2zM1132.2 355.1l11.2 11.2l-11.2 11.2l-11.2 -11.2zM1121 366.3l11.2 11.2l-11.2 11.2l-11.2 -11.2zM1132.2 377.5l11.2 11.2l-11.2 11.2l-11.2 -11.2zM1121 388.7l11.2 11.2l-11.2 11.2l-11.2 -11.2zM1132.2 399.9l11.2 11.2l-11.2 11.2l-11.2 -11.2zM1121 411.1l11.2 11.2l-11.2 11.2l-11.2 -11.2zM1132.2 422.3l11.2 11.2l-11.2 11.2l-11.2 -11.2zM1121 433.5l11.2 11.2l-11.2 11.2l-11.2 -11.2zM1132.2 444.7l11.2 11.2l-11.2 11.2l-11.2 -11.2zM1121 455.9l11.2 11.2l-11.2 11.2l-11.2 -11.2zM1132.2 467.1l11.2 11.2l-11.2 11.2l-11.2 -11.2zM1121 478.3l11.2 11.2l-11.2 11.2l-11.2 -11.2zM1132.2 489.5l11.2 11.2l-11.2 11.2l-11.2 -11.2zM1121 500.7l11.2 11.2l-11.2 11.2l-11.2 -11.2zM1132.2 511.9l11.2 11.2l-11.2 11.2l-11.2 -11.2zM1121 523.1l11.2 11.2l-11.2 11.2l-11.2 -11.2zM1132.2 534.3l11.2 11.2l-11.2 11.2l-11.2 -11.2zM1121 545.5l11.2 11.2l-11.2 11.2l-11.2 -11.2zM1132.2 556.7l11.2 11.2l-11.2 11.2l-11.2 -11.2zM1121 567.9l11.2 11.2l-11.2 11.2l-11.2 -11.2zM1132.2 579.1l11.2 11.2l-11.2 11.2l-11.2 -11.2zM1121 590.3l11.2 11.2l-11.2 11.2l-11.2 -11.2zM1132.2 601.5l11.2 11.2l-11.2 11.2l-11.2 -11.2zM1121 612.7l11.2 11.2l-11.2 11.2l-11.2 -11.2zM1143.4 343.9l11.2 11.2l-11.2 11.2l-11.2 -11.2zM1154.6 355.1l11.2 11.2l-11.2 11.2l-11.2 -11.2zM1165.8 343.9l11.2 11.2l-11.2 11.2l-11.2 -11.2zM1177 355.1l11.2 11.2l-11.2 11.2l-11.2 -11.2zM1188.2 343.9l11.2 11.2l-11.2 11.2l-11.2 -11.2z" fill="#33072a"/></g>
<g clip-path="url(#cPil)"><path d="M1143.4 97.5l11.2 11.2l-11.2 11.2l-11.2 -11.2zM1143.4 119.9l11.2 11.2l-11.2 11.2l-11.2 -11.2zM1165.8 97.5l11.2 11.2l-11.2 11.2l-11.2 -11.2zM1165.8 119.9l11.2 11.2l-11.2 11.2l-11.2 -11.2z" fill="#9a1f78"/><path d="M1121 187.1l11.2 11.2l-11.2 11.2l-11.2 -11.2zM1143.4 187.1l11.2 11.2l-11.2 11.2l-11.2 -11.2zM1165.8 187.1l11.2 11.2l-11.2 11.2l-11.2 -11.2zM1188.2 187.1l11.2 11.2l-11.2 11.2l-11.2 -11.2z" fill="#4e0c3e"/><path d="M1132.2 198.3l11.2 11.2l-11.2 11.2l-11.2 -11.2zM1121 209.5l11.2 11.2l-11.2 11.2l-11.2 -11.2zM1154.6 198.3l11.2 11.2l-11.2 11.2l-11.2 -11.2zM1143.4 209.5l11.2 11.2l-11.2 11.2l-11.2 -11.2zM1177 198.3l11.2 11.2l-11.2 11.2l-11.2 -11.2zM1165.8 209.5l11.2 11.2l-11.2 11.2l-11.2 -11.2zM1188.2 209.5l11.2 11.2l-11.2 11.2l-11.2 -11.2z" fill="#33072a"/></g>
<path d="M113 88H1121.5V220.6H516.2V489.25H247.3V220.6H113zM113 624H1122V355.75H1187V800H113zM1121.5 88H1187V219H1121.5z" fill="url(#pat)"/>
<g clip-path="url(#cTop)" fill="none" stroke-linejoin="miter"><path d="M80 220.6H247.3V489.25H516.2V220.6H1160" stroke="#28031f" stroke-opacity=".85" stroke-width="35" filter="url(#blur)"/><path d="M80 220.6H247.3V489.25H516.2V220.6H1160" stroke="#28031f" stroke-width="32.8"/><path d="M129.8 204.2V216.2M146.6 204.2V216.2M163.4 204.2V216.2M180.2 204.2V216.2M197 204.2V216.2M213.8 204.2V216.2M230.6 204.2V216.2M247.4 204.2V216.2M516.2 204.2V216.2M533 204.2V216.2M549.8 204.2V216.2M566.6 204.2V216.2M583.4 204.2V216.2M600.2 204.2V216.2M617 204.2V216.2M633.8 204.2V216.2M650.6 204.2V216.2M667.4 204.2V216.2M684.2 204.2V216.2M701 204.2V216.2M717.8 204.2V216.2M734.6 204.2V216.2M751.4 204.2V216.2M768.2 204.2V216.2M785 204.2V216.2M801.8 204.2V216.2M818.6 204.2V216.2M835.4 204.2V216.2M852.2 204.2V216.2M869 204.2V216.2M885.8 204.2V216.2M902.6 204.2V216.2M919.4 204.2V216.2M936.2 204.2V216.2M953 204.2V216.2M969.8 204.2V216.2M986.6 204.2V216.2M1003.4 204.2V216.2M1020.2 204.2V216.2M1037 204.2V216.2M1053.8 204.2V216.2M1070.6 204.2V216.2M1087.4 204.2V216.2M1104.2 204.2V216.2M1121 204.2V216.2M251.7 236.4H263.7M251.7 253.2H263.7M251.7 270H263.7M251.7 286.8H263.7M251.7 303.6H263.7M251.7 320.4H263.7M251.7 337.2H263.7M251.7 354H263.7M251.7 370.8H263.7M251.7 387.6H263.7M251.7 404.4H263.7M251.7 421.2H263.7M251.7 438H263.7M251.7 454.8H263.7M251.7 471.6H263.7M499.8 236.4H511.8M499.8 253.2H511.8M499.8 270H511.8M499.8 286.8H511.8M499.8 303.6H511.8M499.8 320.4H511.8M499.8 337.2H511.8M499.8 354H511.8M499.8 370.8H511.8M499.8 387.6H511.8M499.8 404.4H511.8M499.8 421.2H511.8M499.8 438H511.8M499.8 454.8H511.8M499.8 471.6H511.8M281 472.85V484.85M297.8 472.85V484.85M314.6 472.85V484.85M331.4 472.85V484.85M348.2 472.85V484.85M365 472.85V484.85M381.8 472.85V484.85M398.6 472.85V484.85M415.4 472.85V484.85M432.2 472.85V484.85M449 472.85V484.85M465.8 472.85V484.85M482.6 472.85V484.85" stroke="#320827" stroke-width="1.3"/><path d="M80 220.6H247.3V489.25H516.2V220.6H1160" stroke="#fff" stroke-width="8.8"/></g>
<g clip-path="url(#cBot)" fill="none" stroke-linejoin="miter"><path d="M80 624H1122V355.75H1230" stroke="#28031f" stroke-opacity=".85" stroke-width="35" filter="url(#blur)"/><path d="M80 624H1122V355.75H1230" stroke="#28031f" stroke-width="32.8"/><path d="M129.8 628.4V640.4M146.6 628.4V640.4M163.4 628.4V640.4M180.2 628.4V640.4M197 628.4V640.4M213.8 628.4V640.4M230.6 628.4V640.4M247.4 628.4V640.4M264.2 628.4V640.4M281 628.4V640.4M297.8 628.4V640.4M314.6 628.4V640.4M331.4 628.4V640.4M348.2 628.4V640.4M365 628.4V640.4M381.8 628.4V640.4M398.6 628.4V640.4M415.4 628.4V640.4M432.2 628.4V640.4M449 628.4V640.4M465.8 628.4V640.4M482.6 628.4V640.4M499.4 628.4V640.4M516.2 628.4V640.4M533 628.4V640.4M549.8 628.4V640.4M566.6 628.4V640.4M583.4 628.4V640.4M600.2 628.4V640.4M617 628.4V640.4M633.8 628.4V640.4M650.6 628.4V640.4M667.4 628.4V640.4M684.2 628.4V640.4M701 628.4V640.4M717.8 628.4V640.4M734.6 628.4V640.4M751.4 628.4V640.4M768.2 628.4V640.4M785 628.4V640.4M801.8 628.4V640.4M818.6 628.4V640.4M835.4 628.4V640.4M852.2 628.4V640.4M869 628.4V640.4M885.8 628.4V640.4M902.6 628.4V640.4M919.4 628.4V640.4M936.2 628.4V640.4M953 628.4V640.4M969.8 628.4V640.4M986.6 628.4V640.4M1003.4 628.4V640.4M1020.2 628.4V640.4M1037 628.4V640.4M1053.8 628.4V640.4M1070.6 628.4V640.4M1087.4 628.4V640.4M1104.2 628.4V640.4M1121 628.4V640.4M1126.4 387.6H1138.4M1126.4 404.4H1138.4M1126.4 421.2H1138.4M1126.4 438H1138.4M1126.4 454.8H1138.4M1126.4 471.6H1138.4M1126.4 488.4H1138.4M1126.4 505.2H1138.4M1126.4 522H1138.4M1126.4 538.8H1138.4M1126.4 555.6H1138.4M1126.4 572.4H1138.4M1126.4 589.2H1138.4M1126.4 606H1138.4M1126.4 622.8H1138.4M1154.6 360.15V372.15M1171.4 360.15V372.15" stroke="#320827" stroke-width="1.3"/><path d="M80 624H1122V355.75H1230" stroke="#fff" stroke-width="8.8"/></g>
<g clip-path="url(#cPil)" fill="none" stroke-linejoin="miter"><path d="M1100 219H1230" stroke="#28031f" stroke-opacity=".85" stroke-width="35" filter="url(#blur)"/><path d="M1100 219H1230" stroke="#28031f" stroke-width="32.8"/><path d="M1137.8 202.6V214.6M1154.6 202.6V214.6M1171.4 202.6V214.6" stroke="#320827" stroke-width="1.3"/><path d="M1100 219H1230" stroke="#fff" stroke-width="8.8"/></g>
<rect x="1121.5" y="152.9" width="65.5" height="1.2" fill="#a3307f"/><rect x="1122" y="420.4" width="65" height="1.8" fill="#b0268a"/><rect x="1122" y="487.6" width="65" height="1.8" fill="#b0268a"/><rect x="1122" y="554.8" width="65" height="1.8" fill="#b0268a"/><rect x="1126.4" y="623.4" width="60.6" height="1.2" fill="#a3307f"/><rect x="1121.5" y="690.5" width="65.5" height="1.2" fill="#a3307f"/><rect x="1121.5" y="757.7" width="65.5" height="1.2" fill="#a3307f"/><rect x="1121" y="89" width="1" height="127" fill="#96307a"/><rect x="1121.2" y="628.4" width="1" height="172" fill="#96307a"/>
<path d="M247.5 489.2L281.1 555.5L314.7 489.2L310.22 489.2L281.1 546.65L251.98 489.2z" fill="#fff"/><path d="M251.98 489.2L281.1 546.65L310.22 489.2z" fill="url(#spkd)"/>
<path d="M314.7 489.2L348.3 555.5L381.9 489.2L377.42 489.2L348.3 546.65L319.18 489.2z" fill="#fff"/><path d="M319.18 489.2L348.3 546.65L377.42 489.2z" fill="url(#spkd)"/>
<path d="M381.9 489.2L415.5 555.5L449.1 489.2L444.62 489.2L415.5 546.65L386.38 489.2z" fill="#fff"/><path d="M386.38 489.2L415.5 546.65L444.62 489.2z" fill="url(#spkd)"/>
<path d="M449.1 489.2L482.7 555.5L516.3 489.2L511.82 489.2L482.7 546.65L453.58 489.2z" fill="#fff"/><path d="M453.58 489.2L482.7 546.65L511.82 489.2z" fill="url(#spkd)"/>
<path d="M1122.3 353.8L1154.3 289.2L1186.3 353.8L1181.84 353.8L1154.3 298.21L1126.76 353.8z" fill="#fff"/><path d="M1126.76 353.8L1154.3 298.21L1181.84 353.8z" fill="url(#spk)"/>
<path d="M1200.7 342.5L1221.65 300.2L1242.6 342.5L1239.48 342.5L1221.65 306.51L1203.82 342.5z" fill="#fff"/><path d="M1203.82 342.5L1221.65 306.51L1239.48 342.5z" fill="url(#spk)"/>
<path d="M583 221.4Q591.15 235.91 597.52 242.7Q606.67 240.95 621.79 234Q619.86 250.54 621.02 259.77Q629.45 263.73 645.77 267Q634.49 279.25 630 287.4Q634.49 295.55 645.77 307.8Q629.45 311.07 621.02 315.03Q619.86 324.26 621.79 340.8Q606.67 333.85 597.52 332.1Q591.15 338.89 583 353.4Q574.85 338.89 568.48 332.1Q559.33 333.85 544.21 340.8Q546.14 324.26 544.98 315.03Q536.55 311.07 520.23 307.8Q531.51 295.55 536 287.4Q531.51 279.25 520.23 267Q536.55 263.73 544.98 259.77Q546.14 250.54 544.21 234Q559.33 240.95 568.48 242.7Q574.85 235.91 583 221.4Z" fill="#fff"/>
<path d="M583 229.9Q590.4 240.7 596.44 246.03Q604.46 245.27 616.8 240.88Q616.43 253.97 618.19 261.83Q625.13 265.94 637.69 269.63Q629.7 280 626.5 287.4Q629.7 294.8 637.69 305.17Q625.13 308.86 618.19 312.97Q616.43 320.83 616.8 333.92Q604.46 329.53 596.44 328.77Q590.4 334.1 583 344.9Q575.6 334.1 569.56 328.77Q561.54 329.53 549.2 333.92Q549.57 320.83 547.81 312.97Q540.87 308.86 528.31 305.17Q536.3 294.8 539.5 287.4Q536.3 280 528.31 269.63Q540.87 265.94 547.81 261.83Q549.57 253.97 549.2 240.88Q561.54 245.27 569.56 246.03Q575.6 240.7 583 229.9Z" fill="#000"/>
<circle cx="583" cy="287.4" r="30" fill="#a8237f" stroke="#c766ad" stroke-width="7"/>
<circle cx="583" cy="287.4" r="12.8" fill="#c86cb1"/>
<path d="M-10 503.75L75 588.75H512V607.6H71.2L-10 528.2z" fill="#e2fafa"/>
<path d="M-10 510.2L73.4 593.6H512V603.4H72.9L-10 520.6z" fill="#fff"/>
<path d="M510.5 576.5L555.3 598.4L510.5 620.3z" fill="#fff" stroke="#0a0a0a" stroke-width="2.1" stroke-linejoin="round"/>
<rect x="483.3" y="107.7" width="139" height="33" fill="#7a2862"/>
<rect x="622.3" y="107.7" width="174.4" height="33" fill="#b9459b"/>
<text x="640" y="132.8" text-anchor="middle" font-family="'Liberation Sans',sans-serif" font-weight="700" font-size="26.5" fill="#fff" textLength="55" lengthAdjust="spacingAndGlyphs">45%</text>
<rect x="21.3" y="109.3" width="95.9" height="69.1" fill="#b8288c" stroke="#fff" stroke-width="3"/>
<rect x="53" y="127" width="13.2" height="34.2" fill="#fff"/><rect x="71.9" y="127" width="13.3" height="34.2" fill="#fff"/>
<circle cx="115.5" cy="176.9" r="18" fill="#000" stroke="#fff" stroke-width="2.6"/>
<text x="115.6" y="185.2" text-anchor="middle" font-family="'Liberation Sans',sans-serif" font-weight="700" font-size="23.5" fill="#fff" textLength="16" lengthAdjust="spacingAndGlyphs">P</text>
<rect x="0.5" y="88.5" width="1279" height="711" fill="none" stroke="#2a64cf" stroke-width="1"/>
</svg>
</body></html>
